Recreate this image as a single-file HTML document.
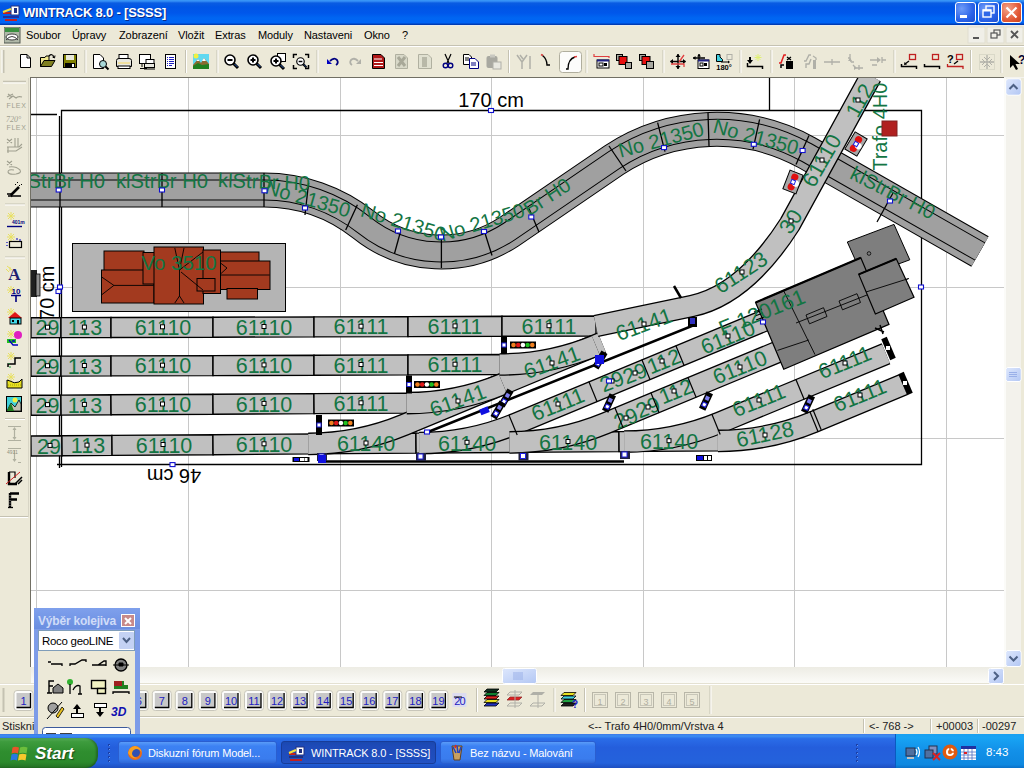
<!DOCTYPE html>
<html><head><meta charset="utf-8">
<style>
*{margin:0;padding:0;box-sizing:border-box}
html,body{width:1024px;height:768px;overflow:hidden;background:#ECE9D8;font-family:"Liberation Sans",sans-serif;font-size:11px;color:#000}
.a{position:absolute}
#title{left:0;top:0;width:1024px;height:25px;background:linear-gradient(#3D9CF8 0px,#2C84F2 1.5px,#0A5CE2 3px,#0055E5 7px,#0057EB 13px,#0066F2 18px,#0064F6 22.5px,#0048C8 24px,#0030A0 25px)}
#title .t{left:23px;top:5px;color:#fff;font-weight:bold;font-size:13px;letter-spacing:-0.2px;text-shadow:1px 1px 0 #0A2A88}
.tb{top:2px;width:21px;height:21px;border:1px solid #fff;border-radius:3px;background:radial-gradient(circle at 30% 30%,#6E9CF8,#2A62E8 60%,#1C4FD0)}
#menu{left:0;top:25px;width:1024px;height:21px;background:linear-gradient(#E8ECF6 0px,#ECE9D8 1.5px);border-bottom:1px solid #C5C2B2}
#menu span{position:absolute;top:4px;font-size:11px;letter-spacing:-0.1px}
#tool{left:0;top:46px;width:1024px;height:31px;background:#ECE9D8;border-top:1px solid #fff}
#left{left:0;top:77px;width:30px;height:607px;background:#ECE9D8}
#canvas{left:30px;top:77px;width:974px;height:590px;background:#fff;border-left:1px solid #716F64;border-top:1px solid #716F64;overflow:hidden}
#vscroll{left:1004px;top:77px;width:20px;height:590px;background:#F4F3EE}
#hscroll{left:31px;top:667px;width:973px;height:17px;background:#F4F3EE}
#corner{left:1004px;top:667px;width:20px;height:17px;background:#ECE9D8}
#btool{left:0;top:684px;width:1024px;height:32px;background:#ECE9D8;border-top:1px solid #fff}
#status{left:0;top:716px;width:1024px;height:18px;background:#ECE9D8;border-top:1px solid #C5C2B2}
#status span{position:absolute;top:3px;font-size:11px;color:#222}
#task{left:0;top:734px;width:1024px;height:34px;background:linear-gradient(#3C78E8 0%,#3D8FF2 6%,#2A6CE8 14%,#245EDC 40%,#2462DC 85%,#1D4EC0 100%)}
.tbtn{top:7px;height:23px;border-radius:3px;color:#fff;font-size:11px;letter-spacing:-0.15px;padding:5px 0 0 29px;white-space:nowrap;overflow:hidden}
</style></head><body>
<div id="title" class="a">
  <div class="a t">WINTRACK 8.0 - [SSSS]</div>
  <div class="a tb" style="left:955px"><svg width="19" height="19" style="position:absolute;left:0;top:0"><rect x="4" y="12" width="7" height="3" fill="#fff"/></svg></div>
  <div class="a tb" style="left:978px"><svg width="19" height="19" style="position:absolute;left:0;top:0"><rect x="7" y="3" width="8" height="7" fill="none" stroke="#fff" stroke-width="1.4"/><rect x="4" y="7" width="8" height="7" fill="#3068E8" stroke="#fff" stroke-width="1.4"/><rect x="4" y="6.5" width="8" height="2" fill="#fff"/></svg></div>
  <div class="a tb" style="left:1001px;background:radial-gradient(circle at 30% 30%,#F4A48A,#E35A38 60%,#C8401C)"><svg width="19" height="19" style="position:absolute;left:0;top:0"><path d="M4.5 4.5 L14.5 14.5 M14.5 4.5 L4.5 14.5" stroke="#fff" stroke-width="2.2"/></svg></div>
  <svg class="a" style="left:2px;top:3px" width="20" height="20"><rect x="1" y="9" width="16" height="2" fill="#C02020"/><rect x="1" y="13" width="16" height="2" fill="#2030A0"/><rect x="3" y="16" width="12" height="2" fill="#C02020"/><rect x="9" y="3" width="8" height="9" fill="#fff" stroke="#203080"/><rect x="12" y="5" width="3" height="5" fill="#203080"/><path d="M1 9 L9 6" stroke="#F0E040" stroke-width="2"/></svg>
</div>
<div id="menu" class="a">
  <svg class="a" style="left:4px;top:2px" width="18" height="18"><rect x="0" y="0" width="16" height="16" fill="#B0B8A8" stroke="#505850"/><rect x="1" y="1" width="14" height="4" fill="#3A9040"/><ellipse cx="8" cy="10" rx="6" ry="3" fill="#fff" stroke="#404040"/><path d="M2 13 Q8 6 14 13" stroke="#404040" fill="none"/></svg>
  <span style="left:26px">Soubor</span>
  <span style="left:72px">Úpravy</span>
  <span style="left:119px">Zobrazení</span>
  <span style="left:178px">Vložit</span>
  <span style="left:215px">Extras</span>
  <span style="left:258px">Moduly</span>
  <span style="left:304px">Nastaveni</span>
  <span style="left:364px">Okno</span>
  <span style="left:402px">?</span>
  <svg class="a" style="left:966px;top:1px" width="58" height="19">
    <rect x="2" y="1" width="17" height="16" fill="#F0EFE8" stroke="#E0DED0"/><rect x="7" y="11" width="6" height="2" fill="#555"/>
    <rect x="21" y="1" width="17" height="16" fill="#F0EFE8" stroke="#E0DED0"/><rect x="28" y="4" width="6" height="5" fill="none" stroke="#555" stroke-width="1.2"/><rect x="25" y="7" width="6" height="5" fill="#F0EFE8" stroke="#555" stroke-width="1.2"/>
    <rect x="40" y="1" width="17" height="16" fill="#F0EFE8" stroke="#E0DED0"/><path d="M45 5 L52 12 M52 5 L45 12" stroke="#555" stroke-width="1.8"/>
  </svg>
</div>
<div id="tool" class="a"><svg class="a" style="left:0;top:-47px" width="1024" height="80"><line x1="3.5" y1="50" x2="3.5" y2="73" stroke="#C5C2B2" stroke-width="2"/><line x1="2" y1="50" x2="2" y2="73" stroke="#fff"/><rect x="559.5" y="51.5" width="22" height="21" rx="3" fill="#FCFCFB" stroke="#B0AE9E"/><g transform="translate(19,54)"><path d="M1.5 0.5 H8 L11.5 4 V13.5 H1.5Z" fill="#fff" stroke="#000"/><path d="M8 0.5 V4 H11.5" fill="none" stroke="#000"/></g><g transform="translate(40,54)"><path d="M0.5 3.5 H5 L6 2 H9 V12.5 H0.5Z" fill="#F0E890" stroke="#000"/><path d="M0.5 12.5 L4 6.5 H15 L11.5 12.5Z" fill="#808020" stroke="#000"/><path d="M9 2 Q12 -1 14 3" fill="none" stroke="#000" stroke-width="1.2"/><path d="M12.5 3 L14.5 4 L15 1.5" fill="none" stroke="#000"/></g><g transform="translate(63,54)"><rect x="0.5" y="0.5" width="13" height="13" fill="#808000" stroke="#000"/><rect x="3" y="1" width="8" height="5" fill="#E8E8D8"/><rect x="2" y="9" width="10" height="4.5" fill="#000"/><rect x="9" y="10" width="2" height="3" fill="#fff"/></g><g transform="translate(93,54)"><path d="M0.5 0.5 H7 L10.5 4 V14.5 H0.5Z" fill="#fff" stroke="#000"/><circle cx="10" cy="10" r="3.5" fill="#A8D8D8" stroke="#000"/><path d="M12.5 12.5 L15.5 15.5" stroke="#000" stroke-width="2"/></g><g transform="translate(116,54)"><rect x="3" y="0.5" width="9" height="5" fill="#fff" stroke="#000"/><path d="M0.5 6.5 Q0.5 4.5 3 4.5 H13 Q15.5 4.5 15.5 6.5 V12.5 H0.5Z" fill="#E8E8E0" stroke="#000"/><rect x="2" y="8" width="12" height="2" fill="#F0E0A0"/><rect x="2" y="12" width="12" height="2.5" fill="#fff" stroke="#000"/></g><g transform="translate(139,54)"><rect x="0.5" y="0.5" width="11" height="9" fill="#fff" stroke="#000"/><path d="M3 10 V13 M1 14.5 H8" stroke="#000"/><rect x="7" y="5.5" width="8" height="4" fill="#fff" stroke="#000"/><rect x="5.5" y="9.5" width="10" height="4" fill="#E8E8E0" stroke="#000"/><path d="M5 15 H16" stroke="#000"/></g><g transform="translate(165,54)"><rect x="0.5" y="0.5" width="10" height="14" fill="#fff" stroke="#000"/><path d="M2 3.5H3 M4 3.5H9 M2 5.5H3 M4 5.5H9 M2 7.5H3 M4 7.5H9 M2 9.5H3 M4 9.5H9 M2 11.5H3 M4 11.5H7" stroke="#2020C0"/></g><g transform="translate(193,54)"><rect x="0" y="0" width="16" height="15" fill="#60D8F0"/><circle cx="3" cy="2" r="2.5" fill="#F0F040"/><path d="M0 15 V11 L5 5 L8 9 L11 4 L16 10 V15Z" fill="#8A6A30"/><path d="M5 5 L6.5 7 H3.5Z M11 4 L13 7 H9Z" fill="#fff"/><path d="M0 15 V12 L5 9 L9 11 L16 10 V15Z" fill="#208020"/></g><g transform="translate(224,54)"><circle cx="6" cy="6" r="5" fill="#fff" stroke="#000" stroke-width="1.6"/><path d="M9.5 9.5 L14 14" stroke="#000" stroke-width="3"/><path d="M10.5 10 L13.5 13" stroke="#3060B0" stroke-width="1"/><path d="M3.5 6H8.5" stroke="#000" stroke-width="2"/></g><g transform="translate(247,54)"><circle cx="6" cy="6" r="5" fill="#fff" stroke="#000" stroke-width="1.6"/><path d="M9.5 9.5 L14 14" stroke="#000" stroke-width="3"/><path d="M10.5 10 L13.5 13" stroke="#3060B0" stroke-width="1"/><path d="M3.5 6H8.5" stroke="#000" stroke-width="2"/><path d="M6 3.5V8.5" stroke="#000" stroke-width="2"/></g><g transform="translate(270,53)"><rect x="7.5" y="0.5" width="8" height="8" fill="#fff" stroke="#000"/><g transform="translate(0,2)"><circle cx="6" cy="6" r="5" fill="#fff" stroke="#000" stroke-width="1.6"/><path d="M9.5 9.5 L14 14" stroke="#000" stroke-width="3"/><path d="M10.5 10 L13.5 13" stroke="#3060B0" stroke-width="1"/><path d="M3.5 6H8.5" stroke="#000" stroke-width="2"/><path d="M6 3.5V8.5" stroke="#000" stroke-width="2"/></g></g><g transform="translate(293,54)"><path d="M0.5 4V0.5H4 M12 0.5H15.5V4 M15.5 11V14.5H12 M4 14.5H0.5V11" fill="none" stroke="#000" stroke-width="1.5"/><g transform="translate(3,3) scale(0.75)"><circle cx="6" cy="6" r="5" fill="#fff" stroke="#000" stroke-width="1.6"/><path d="M9.5 9.5 L14 14" stroke="#000" stroke-width="3"/><path d="M10.5 10 L13.5 13" stroke="#3060B0" stroke-width="1"/><path d="M3.5 6H8.5" stroke="#000" stroke-width="2"/></g></g><g transform="translate(326,57)"><path d="M4 4 Q8 0 11 3 Q13 6 10 8" fill="none" stroke="#000080" stroke-width="1.8"/><path d="M1 2 V7 H6Z" fill="#0000C0"/></g><g transform="translate(349,57)"><path d="M9 4 Q5 0 2 3 Q0 6 3 8" fill="none" stroke="#B0B0A8" stroke-width="1.8"/><path d="M12 2 V7 H7Z" fill="#B0B0A8"/></g><g transform="translate(372,54)"><path d="M0.5 0.5 H9 L12.5 4 V14.5 H0.5Z" fill="#B01818" stroke="#000"/><path d="M2 5H10 M2 8.5H11 M2 11.5H11" stroke="#fff" stroke-width="1"/></g><g transform="translate(395,54)"><path d="M0.5 0.5 H9 L12.5 4 V14.5 H0.5Z" fill="#D8D8C8" stroke="#B0B0A0"/><path d="M3 3 L10 12 M10 3 L3 12" stroke="#A8A898" stroke-width="3"/></g><g transform="translate(418,54)"><path d="M0.5 0.5 H10 L13.5 4 V14.5 H0.5Z" fill="#E0E0D0" stroke="#B0B0A0"/><rect x="4" y="3" width="5" height="10" fill="#B8B8A8"/></g><g transform="translate(442,54)"><path d="M3 0 L7 9 M9 0 L5 9" stroke="#000" stroke-width="1.2"/><circle cx="3.5" cy="11.5" r="2.3" fill="none" stroke="#000080" stroke-width="1.4"/><circle cx="8.5" cy="11.5" r="2.3" fill="none" stroke="#000080" stroke-width="1.4"/></g><g transform="translate(463,54)"><path d="M0.5 0.5H6L8.5 3V10.5H0.5Z" fill="#fff" stroke="#000"/><path d="M2 4H6 M2 6H6" stroke="#000"/><path d="M6.5 4.5H12L15.5 8V14.5H6.5Z" fill="#fff" stroke="#000080"/><path d="M8 9H13 M8 11H13" stroke="#000080"/></g><g transform="translate(486,54)"><rect x="0.5" y="2" width="11" height="12" rx="2" fill="#A8A8A0"/><rect x="4" y="0.5" width="5" height="3" fill="#C8C8C0"/><rect x="7" y="8" width="8" height="7" fill="#E8E8E0" stroke="#B0B0A8"/></g><g transform="translate(516,54)"><path d="M1 1 L6 8 V15 M11 1 L6 8 M4 1 L7 5 M14 2 L14 15" fill="none" stroke="#B0B0A8" stroke-width="1.5"/></g><g transform="translate(541,54)"><path d="M1 1 Q6 5 6 11 H9" fill="none" stroke="#000" stroke-width="1.4"/><path d="M0 0.5 L2 1.5" stroke="#E04040" stroke-width="1.4"/></g><g transform="translate(563,54)"><path d="M3 15 H5 Q5 5 12 3" fill="none" stroke="#000" stroke-width="1.4"/><path d="M11 3 L14 2.5" stroke="#E04040" stroke-width="1.4"/></g><g transform="translate(593,54)"><path d="M1 0 V2.5 H16 V4" fill="none" stroke="#E04040" stroke-width="1.2"/><rect x="4" y="6" width="12" height="8" fill="#fff" stroke="#000"/><rect x="4" y="5.5" width="12" height="2" fill="#202080"/><rect x="6" y="9" width="4" height="3" fill="none" stroke="#000"/><rect x="11" y="9" width="3" height="3" fill="#000"/></g><g transform="translate(616,54)"><rect x="0.5" y="0.5" width="6" height="6" fill="#A8A8A0" stroke="#000"/><rect x="3" y="2.5" width="8" height="8" fill="#E81010" stroke="#000"/><rect x="9.5" y="8.5" width="6" height="6" fill="#A8A8A0" stroke="#000"/></g><g transform="translate(639,54)"><rect x="0.5" y="0.5" width="6" height="6" fill="#A8A8A0" stroke="#000"/><rect x="3" y="2.5" width="8" height="8" fill="#E81010" stroke="#000"/><rect x="7.5" y="7.5" width="7" height="7" fill="#A8A8A0" stroke="#000"/></g><g transform="translate(670,54)"><path d="M8 0 V15 M0.5 7.5 H15.5" stroke="#000" stroke-width="1.4"/><path d="M8 0 L5.5 3 H10.5Z M8 15 L5.5 12 H10.5Z M0 7.5 L3 5 V10Z M16 7.5 L13 5 V10Z" fill="#000"/><path d="M1 10 H14 V13 M9 8 L14 1" fill="none" stroke="#E04040" stroke-width="1.3"/></g><g transform="translate(693,54)"><path d="M6 0 V7 M0 4 H12" stroke="#000" stroke-width="1.3"/><path d="M6 0 L4 2.5 H8Z M0 4 L2.5 2 V6Z" fill="#000"/><rect x="5" y="6" width="11" height="8.5" fill="#fff" stroke="#000"/><rect x="5" y="5.5" width="11" height="2" fill="#202080"/><rect x="7" y="9" width="3" height="3" fill="none" stroke="#000"/><rect x="11" y="9" width="3" height="3" fill="#000"/></g><g transform="translate(716,54)"><path d="M0.5 0.5 H4 V3 L6.5 5.5 V7.5 H0.5Z" fill="#40D0E0" stroke="#000"/><rect x="11" y="0.5" width="5" height="5" fill="none" stroke="#B0B0A8"/><path d="M5 8 H12" stroke="#000"/><path d="M12 6.5 L14 8 L12 9.5Z" fill="#000"/><text x="8" y="16" font-size="7.5" font-weight="bold" text-anchor="middle" font-family="Liberation Sans">180°</text></g><g transform="translate(747,54)"><path d="M3 3 V8" stroke="#000" stroke-width="2"/><path d="M0 6 L3 10 L6 6Z" fill="#000"/><path d="M0.5 9 V12.5 H15.5 V15" fill="none" stroke="#000" stroke-width="1.5"/><path d="M11 0 V7 M7.5 3.5 H14.5 M8.5 1 L13.5 6 M13.5 1 L8.5 6" stroke="#E0F070" stroke-width="1"/></g><g transform="translate(778,54)"><path d="M1 9 H3 L6 1 H8" fill="none" stroke="#E02020" stroke-width="1.5"/><path d="M3 14 V11 H6" fill="none" stroke="#000" stroke-width="1.5"/><rect x="8" y="7" width="7" height="8" fill="#000"/><path d="M9 3 L13 6 M13 3 L9 6" stroke="#000" stroke-width="1.3"/></g><g transform="translate(803,54)"><path d="M1 7 H3 L6 1 H8 M3 14 V10 H6 L8 5" fill="none" stroke="#B0B0A8" stroke-width="1.4"/><rect x="10" y="6" width="3" height="9" fill="#B0B0A8"/><path d="M10 2 L13 4 V6" fill="none" stroke="#B0B0A8" stroke-width="1.3"/></g><g transform="translate(824,54)"><path d="M0 8 H16 M8 5 V11" stroke="#B0B0A8" stroke-width="1.3"/></g><g transform="translate(847,54)"><path d="M3 0 V4 H1 M3 4 L4 8 M4 8 H7 M6 11 L9 14 H16 M12 11 V16" fill="none" stroke="#B0B0A8" stroke-width="1.3"/><path d="M3 4 L1 7 H5Z M10 14 L7 12 V16Z" fill="#B0B0A8"/></g><g transform="translate(870,54)"><path d="M0 6 H9 M2 11 H7 M12 3 V9 M12 6 H16" fill="none" stroke="#B0B0A8" stroke-width="1.3"/><path d="M11 6 L7 3 V9Z" fill="#B0B0A8"/></g><g transform="translate(901,54)"><rect x="8.5" y="0.5" width="6" height="5" fill="none" stroke="#C02020" stroke-width="1.3"/><path d="M8 7 L4 10" stroke="#000" stroke-width="1.3"/><path d="M3 11 L3.5 8 L6 10.5Z" fill="#000"/><path d="M0.5 10 V12.5 H15.5 V15" fill="none" stroke="#000" stroke-width="1.5"/></g><g transform="translate(924,54)"><rect x="8.5" y="0.5" width="6" height="5" fill="none" stroke="#C02020" stroke-width="1.3"/><path d="M0.5 10 V12.5 H15.5 V15" fill="none" stroke="#000" stroke-width="1.5"/></g><g transform="translate(947,54)"><text x="0" y="9" font-size="11" font-weight="bold" font-family="Liberation Sans">?</text><rect x="9.5" y="0.5" width="6" height="5" fill="none" stroke="#C02020" stroke-width="1.3"/><path d="M11 7 L7 10" stroke="#000" stroke-width="1.3"/><path d="M0.5 10 V12.5 H16 V15" fill="none" stroke="#C02020" stroke-width="1.3"/></g><g transform="translate(979,54)"><path d="M8 1 V15 M1 8 H15" stroke="#B0B0A8" stroke-width="1.3"/><path d="M5 3 L8 6 L11 3 M5 13 L8 10 L11 13 M3 5 L6 8 L3 11 M13 5 L10 8 L13 11" fill="none" stroke="#B0B0A8"/><path d="M0.5 0.5 H15.5 V15.5 H0.5Z" fill="none" stroke="#C8C8B8" stroke-dasharray="1 1"/></g><g transform="translate(1009,54)"><path d="M1 1 V14 L4 11 L7 16 L9 15 L6.5 10 H11Z" fill="#000"/><text x="9" y="10" font-size="12" font-weight="bold" fill="#000030" font-family="Liberation Sans">?</text></g><line x1="85.0" y1="50" x2="85.0" y2="73" stroke="#C5C2B2"/><line x1="86.0" y1="50" x2="86.0" y2="73" stroke="#fff"/><line x1="185.5" y1="50" x2="185.5" y2="73" stroke="#C5C2B2"/><line x1="186.5" y1="50" x2="186.5" y2="73" stroke="#fff"/><line x1="217.0" y1="50" x2="217.0" y2="73" stroke="#C5C2B2"/><line x1="218.0" y1="50" x2="218.0" y2="73" stroke="#fff"/><line x1="317.0" y1="50" x2="317.0" y2="73" stroke="#C5C2B2"/><line x1="318.0" y1="50" x2="318.0" y2="73" stroke="#fff"/><line x1="508.5" y1="50" x2="508.5" y2="73" stroke="#C5C2B2"/><line x1="509.5" y1="50" x2="509.5" y2="73" stroke="#fff"/><line x1="586.0" y1="50" x2="586.0" y2="73" stroke="#C5C2B2"/><line x1="587.0" y1="50" x2="587.0" y2="73" stroke="#fff"/><line x1="663.0" y1="50" x2="663.0" y2="73" stroke="#C5C2B2"/><line x1="664.0" y1="50" x2="664.0" y2="73" stroke="#fff"/><line x1="740.0" y1="50" x2="740.0" y2="73" stroke="#C5C2B2"/><line x1="741.0" y1="50" x2="741.0" y2="73" stroke="#fff"/><line x1="771.0" y1="50" x2="771.0" y2="73" stroke="#C5C2B2"/><line x1="772.0" y1="50" x2="772.0" y2="73" stroke="#fff"/><line x1="894.0" y1="50" x2="894.0" y2="73" stroke="#C5C2B2"/><line x1="895.0" y1="50" x2="895.0" y2="73" stroke="#fff"/><line x1="970.5" y1="50" x2="970.5" y2="73" stroke="#C5C2B2"/><line x1="971.5" y1="50" x2="971.5" y2="73" stroke="#fff"/><line x1="1001.0" y1="50" x2="1001.0" y2="73" stroke="#C5C2B2"/><line x1="1002.0" y1="50" x2="1002.0" y2="73" stroke="#fff"/></svg></div>
<div id="left" class="a"><svg class="a" style="left:0;top:-77px" width="32" height="700"><line x1="3" y1="81.5" x2="26" y2="81.5" stroke="#C5C2B2" stroke-width="1.5"/><line x1="3" y1="83" x2="26" y2="83" stroke="#fff"/><g transform="translate(6,93)"><path d="M2 1 L6 4 M1 4 L7 1 M3 6 L7 3 L10 5 Q12 3 16 4" fill="none" stroke="#A0A090" stroke-width="1.2"/><text x="0.5" y="15" font-size="7" fill="#A0A090" font-family="Liberation Sans" letter-spacing="0.6">FLEX</text></g><g transform="translate(6,115)"><text x="0" y="7" font-size="8" font-style="italic" fill="#A0A090" font-family="Liberation Serif">720°</text><text x="0.5" y="15" font-size="7" fill="#A0A090" font-family="Liberation Sans" letter-spacing="0.6">FLEX</text></g><g transform="translate(6,138)"><path d="M1 1 L6 5 M1 5 L6 1 M9 0 V9 M12 0 V9 M1 9 H13 L16 6 M1 13 H10 L16 9 M2 9 V15" fill="none" stroke="#A0A090" stroke-width="1.1"/></g><g transform="translate(6,160)"><path d="M1 1 L6 5 M1 5 L6 1 M3 7 Q10 6 14 10 Q16 13 10 14 Q3 15 2 12 Q2 9 8 10" fill="none" stroke="#A0A090" stroke-width="1.1"/></g><g transform="translate(6,182)"><path d="M1 12 H5 L6 15 M2 14 H15" fill="none" stroke="#000" stroke-width="1.4"/><path d="M5 13 L13 5" stroke="#000" stroke-width="2.5"/><path d="M11 1 L12 0 M15 3 L16 2 M13 3 L14 4 M9 3 L10 2" stroke="#000" stroke-width="1"/></g><g transform="translate(6,212)"><path d="M5 0 V8 M1 4 H9 M2 1 L8 7 M8 1 L2 7" stroke="#E8E060" stroke-width="1"/><text x="6" y="12" font-size="5" fill="#000080" font-family="Liberation Sans" font-weight="bold">401m</text><path d="M1 14.5 H16" stroke="#000080" stroke-width="1.4"/></g><g transform="translate(6,233)"><path d="M5 0 V8 M1 4 H9 M2 1 L8 7 M8 1 L2 7" stroke="#E8E060" stroke-width="1"/><rect x="3.5" y="8.5" width="12" height="6" fill="none" stroke="#000" stroke-width="1.2"/><path d="M1 9 V10 M1 12 V13 M10 6 H12 M13 7 H15" stroke="#0000C0" stroke-width="1.2"/></g><g transform="translate(6,264)"><path d="M0 5 L3 8 M4 3 L4 7 M1 2 L6 6" stroke="#E8E060"/><text x="8.5" y="15.5" font-size="17" font-weight="bold" fill="#202070" text-anchor="middle" font-family="Liberation Serif">A</text></g><g transform="translate(6,286)"><path d="M5 0 V8 M1 4 H9 M2 1 L8 7 M8 1 L2 7" stroke="#E8E060" stroke-width="1"/><text x="10" y="8" font-size="8" font-weight="bold" fill="#000080" text-anchor="middle" font-family="Liberation Sans">10</text><path d="M5 9.5 H15 M10 9.5 V16" stroke="#000080" stroke-width="1.6"/></g><g transform="translate(6,308)"><path d="M5 0 V8 M1 4 H9 M2 1 L8 7 M8 1 L2 7" stroke="#E8E060" stroke-width="1"/><path d="M2 10 L9 4 L16 10Z" fill="#E01818"/><rect x="4" y="10" width="11" height="6" fill="#40D8E8" stroke="#000"/><rect x="6" y="12" width="2" height="2" fill="#000"/><rect x="11" y="12" width="2" height="4" fill="#000"/></g><g transform="translate(6,330)"><path d="M5 0 V8 M1 4 H9 M2 1 L8 7 M8 1 L2 7" stroke="#E8E060" stroke-width="1"/><circle cx="12" cy="5" r="4" fill="#E020C0"/><path d="M1 9 H10 V13 H1Z" fill="#20C020"/><path d="M3 10 L7 15 H12 M6 11 H9" stroke="#0000C0" stroke-width="1.3" fill="none"/></g><g transform="translate(6,352)"><path d="M5 0 V8 M1 4 H9 M2 1 L8 7 M8 1 L2 7" stroke="#E8E060" stroke-width="1"/><path d="M2 15 V12 H9 V6 H15" fill="none" stroke="#000" stroke-width="1.5"/><path d="M3 15 H5 M3 12 V11" stroke="#20A040"/></g><g transform="translate(6,373)"><path d="M5 0 V8 M1 4 H9 M2 1 L8 7 M8 1 L2 7" stroke="#E8E060" stroke-width="1"/><path d="M1 7 V15 H16 V6 L13 9 Q8 11 4 8Z" fill="#E8E020" stroke="#000"/><path d="M2 12 H15" stroke="#A0A010" stroke-dasharray="1 1"/></g><g transform="translate(6,396)"><rect x="0.5" y="0.5" width="15" height="15" fill="#40D0D8" stroke="#000"/><circle cx="9" cy="4" r="2.5" fill="#F0F040"/><path d="M1 15 L5 7 L9 11 L13 4 L15 8 V15Z" fill="#C0C0B0" stroke="#000" stroke-width="0.8"/><path d="M1 15 L5 7 L8 15Z" fill="#208020"/></g><g transform="translate(6,426)"><path d="M2 0.5 H15 M2 14.5 H15 M8.5 2 V13" stroke="#B0B0A0" stroke-width="1.2"/><path d="M8.5 1 L6.5 4 H10.5Z M8.5 14 L6.5 11 H10.5Z" fill="#B0B0A0"/></g><g transform="translate(6,448)"><path d="M2 0.5 H15 M8.5 2 V13 M12 14.5 H15" stroke="#B0B0A0" stroke-width="1.2"/><path d="M8.5 14 L6.5 11 H10.5Z" fill="#B0B0A0"/><text x="1" y="6" font-size="5" fill="#909080" font-family="Liberation Sans">4911</text></g><g transform="translate(6,471)"><path d="M3 1 V13 H11" fill="none" stroke="#000" stroke-width="2.4"/><path d="M3 1 H9 L9 7" fill="none" stroke="#000" stroke-width="1.2"/><path d="M9 13 L16 6 M12 13 L16 9" stroke="#000" stroke-width="1.5"/><path d="M0 13 L14 1" stroke="#D02020" stroke-width="1"/></g><g transform="translate(6,492)"><path d="M4 1 V15 M4 1.5 H13 M4 7.5 H11" stroke="#000" stroke-width="2.4"/><path d="M2 15.5 H7" stroke="#000" stroke-width="1.3"/><path d="M4 3 V14" stroke="#fff" stroke-width="0.6" stroke-dasharray="1 1.5"/></g><line x1="5" y1="204.0" x2="25" y2="204.0" stroke="#C5C2B2"/><line x1="5" y1="205.0" x2="25" y2="205.0" stroke="#fff"/><line x1="5" y1="257.0" x2="25" y2="257.0" stroke="#C5C2B2"/><line x1="5" y1="258.0" x2="25" y2="258.0" stroke="#fff"/><line x1="5" y1="418.5" x2="25" y2="418.5" stroke="#C5C2B2"/><line x1="5" y1="419.5" x2="25" y2="419.5" stroke="#fff"/><line x1="0" y1="516.5" x2="28" y2="516.5" stroke="#C5C2B2"/><line x1="0" y1="517.5" x2="28" y2="517.5" stroke="#fff"/><line x1="28.5" y1="78" x2="28.5" y2="517" stroke="#D8D5C5"/></svg></div>
<div id="canvas" class="a"><svg class="a" style="left:-31px;top:-78px" width="1024" height="768" font-family="Liberation Sans, sans-serif"><line x1="36.5" y1="78" x2="36.5" y2="667" stroke="#C8C8C8"/>
<line x1="188.5" y1="78" x2="188.5" y2="667" stroke="#C8C8C8"/>
<line x1="340.5" y1="78" x2="340.5" y2="667" stroke="#C8C8C8"/>
<line x1="491.5" y1="78" x2="491.5" y2="667" stroke="#C8C8C8"/>
<line x1="643.5" y1="78" x2="643.5" y2="667" stroke="#C8C8C8"/>
<line x1="794.5" y1="78" x2="794.5" y2="667" stroke="#C8C8C8"/>
<line x1="946.5" y1="78" x2="946.5" y2="667" stroke="#C8C8C8"/>
<line x1="31" y1="135.5" x2="1004" y2="135.5" stroke="#C8C8C8"/>
<line x1="31" y1="287.5" x2="1004" y2="287.5" stroke="#C8C8C8"/>
<line x1="31" y1="438.5" x2="1004" y2="438.5" stroke="#C8C8C8"/>
<line x1="31" y1="590.5" x2="1004" y2="590.5" stroke="#C8C8C8"/>
<path d="M31 114.5 H57 M59.5 116 V468 M61.5 467 V110.5 H921.5 V464.5 H57" fill="none" stroke="#000" stroke-width="1.3"/>
<path d="M769.5 78 V110" stroke="#000" stroke-width="1.3"/>
<path d="M20 190 L264 190 A160 160 0 0 1 363.9 224.9 A123.7 123.7 0 0 0 509.2 231.6 L614 160.1 A186.2 186.2 0 0 1 807 152.8 L980 251.5" fill="none" stroke="#000" stroke-width="35"/>
<path d="M20 190 L264 190 A160 160 0 0 1 363.9 224.9 A123.7 123.7 0 0 0 509.2 231.6 L614 160.1 A186.2 186.2 0 0 1 807 152.8 L980 251.5" fill="none" stroke="#A0A0A0" stroke-width="33"/>
<path d="M20 190 L264 190 A160 160 0 0 1 363.9 224.9 A123.7 123.7 0 0 0 509.2 231.6 L614 160.1 A186.2 186.2 0 0 1 807 152.8 L980 251.5" fill="none" stroke="#000" stroke-width="21"/>
<path d="M20 190 L264 190 A160 160 0 0 1 363.9 224.9 A123.7 123.7 0 0 0 509.2 231.6 L614 160.1 A186.2 186.2 0 0 1 807 152.8 L980 251.5" fill="none" stroke="#A0A0A0" stroke-width="19"/>
<rect x="72.5" y="243.5" width="213" height="68" fill="#B4B4B4" stroke="#000"/>
<rect x="104.0" y="251.0" width="40.0" height="26.0" fill="#A33A1F" stroke="#000" stroke-width="1"/>
<rect x="101.5" y="270.0" width="52.5" height="33.0" fill="#A33A1F" stroke="#000" stroke-width="1"/>
<rect x="143.0" y="252.5" width="12.0" height="31.5" fill="#A33A1F" stroke="#000" stroke-width="1"/>
<rect x="154.0" y="247.0" width="49.5" height="57.0" fill="#A33A1F" stroke="#000" stroke-width="1"/>
<rect x="203.0" y="250.0" width="17.5" height="43.5" fill="#A33A1F" stroke="#000" stroke-width="1"/>
<rect x="220.5" y="252.0" width="38.5" height="11.0" fill="#A33A1F" stroke="#000" stroke-width="1"/>
<rect x="220.5" y="261.0" width="49.5" height="28.5" fill="#A33A1F" stroke="#000" stroke-width="1"/>
<rect x="227.0" y="288.5" width="30.5" height="10.5" fill="#A33A1F" stroke="#000" stroke-width="1"/>
<rect x="197.0" y="278.5" width="18.0" height="12.5" fill="#A33A1F" stroke="#000" stroke-width="1"/>
<path d="M101.7 277 L113.9 285.4 L101.7 294.8 M113.9 285.4 H153.7 M174.8 248 L179.5 270 L184 248 M179.5 270 V296 L174.8 303 M179.5 296 L184 303 M179.5 270 L203 252 M181 272 L203 290 M220.5 275 H269.7 M220.5 263 L227 268 L220.5 274" fill="none" stroke="#000" stroke-width="0.9"/>
<polygon points="31.0,337.7 61.0,337.6 61.0,317.6 31.0,317.7" fill="#C0C0C0" stroke="#000" stroke-width="1.4"/>
<polygon points="61.0,337.6 111.0,337.5 111.0,317.5 61.0,317.6" fill="#C0C0C0" stroke="#000" stroke-width="1.4"/>
<polygon points="111.0,337.5 213.0,337.2 213.0,317.2 111.0,317.5" fill="#C0C0C0" stroke="#000" stroke-width="1.4"/>
<polygon points="213.0,337.2 314.0,336.9 314.0,316.9 213.0,317.2" fill="#C0C0C0" stroke="#000" stroke-width="1.4"/>
<polygon points="314.0,336.9 408.0,336.6 408.0,316.6 314.0,316.9" fill="#C0C0C0" stroke="#000" stroke-width="1.4"/>
<polygon points="408.0,336.6 502.0,336.3 502.0,316.3 408.0,316.6" fill="#C0C0C0" stroke="#000" stroke-width="1.4"/>
<polygon points="502.0,336.3 596.0,336.0 596.0,316.0 502.0,316.3" fill="#C0C0C0" stroke="#000" stroke-width="1.4"/>
<polygon points="31.0,376.2 61.0,376.1 61.0,356.1 31.0,356.2" fill="#C0C0C0" stroke="#000" stroke-width="1.4"/>
<polygon points="61.0,376.1 111.0,375.9 111.0,355.9 61.0,356.1" fill="#C0C0C0" stroke="#000" stroke-width="1.4"/>
<polygon points="111.0,375.9 213.0,375.6 213.0,355.6 111.0,355.9" fill="#C0C0C0" stroke="#000" stroke-width="1.4"/>
<polygon points="213.0,375.6 314.0,375.2 314.0,355.2 213.0,355.6" fill="#C0C0C0" stroke="#000" stroke-width="1.4"/>
<polygon points="314.0,375.2 408.0,374.9 408.0,354.9 314.0,355.2" fill="#C0C0C0" stroke="#000" stroke-width="1.4"/>
<polygon points="408.0,374.9 502.0,374.5 502.0,354.5 408.0,354.9" fill="#C0C0C0" stroke="#000" stroke-width="1.4"/>
<polygon points="31.1,415.2 61.1,415.1 60.9,395.1 30.9,395.2" fill="#C0C0C0" stroke="#000" stroke-width="1.4"/>
<polygon points="61.1,415.1 111.1,414.8 110.9,394.8 60.9,395.1" fill="#C0C0C0" stroke="#000" stroke-width="1.4"/>
<polygon points="111.1,414.8 213.1,414.2 212.9,394.2 110.9,394.8" fill="#C0C0C0" stroke="#000" stroke-width="1.4"/>
<polygon points="213.1,414.2 314.1,413.6 313.9,393.6 212.9,394.2" fill="#C0C0C0" stroke="#000" stroke-width="1.4"/>
<polygon points="314.1,413.6 408.1,413.1 407.9,393.1 313.9,393.6" fill="#C0C0C0" stroke="#000" stroke-width="1.4"/>
<polygon points="31.1,456.0 62.1,455.8 61.9,435.8 30.9,436.0" fill="#C0C0C0" stroke="#000" stroke-width="1.4"/>
<polygon points="62.1,455.8 112.1,455.4 111.9,435.4 61.9,435.8" fill="#C0C0C0" stroke="#000" stroke-width="1.4"/>
<polygon points="112.1,455.4 213.1,454.7 212.9,434.7 111.9,435.4" fill="#C0C0C0" stroke="#000" stroke-width="1.4"/>
<polygon points="213.1,454.7 314.1,453.9 313.9,433.9 212.9,434.7" fill="#C0C0C0" stroke="#000" stroke-width="1.4"/>
<polygon points="314.1,453.9 416.1,453.1 415.9,433.1 313.9,433.9" fill="#C0C0C0" stroke="#000" stroke-width="1.4"/>
<polygon points="416.1,453.1 517.1,452.4 516.9,432.4 415.9,433.1" fill="#C0C0C0" stroke="#000" stroke-width="1.4"/>
<polygon points="517.1,452.4 619.1,451.6 618.9,431.6 516.9,432.4" fill="#C0C0C0" stroke="#000" stroke-width="1.4"/>
<polygon points="619.1,451.6 720.1,450.9 719.9,430.9 618.9,431.6" fill="#C0C0C0" stroke="#000" stroke-width="1.4"/>
<path d="M308.2 443.9 Q358.2 443.9 404.4 424.8 L602.0 342.8" fill="none" stroke="#000" stroke-width="22.6"/>
<path d="M308.2 443.9 Q358.2 443.9 404.4 424.8 L602.0 342.8" fill="none" stroke="#C0C0C0" stroke-width="20"/>
<path d="M419.1 443.1 Q469.1 443.1 515.3 424.0 L792.0 309.1" fill="none" stroke="#000" stroke-width="22.6"/>
<path d="M419.1 443.1 Q469.1 443.1 515.3 424.0 L792.0 309.1" fill="none" stroke="#C0C0C0" stroke-width="20"/>
<path d="M509.4 442.4 Q559.4 442.4 605.6 423.3 L802.0 341.8" fill="none" stroke="#000" stroke-width="22.6"/>
<path d="M509.4 442.4 Q559.4 442.4 605.6 423.3 L802.0 341.8" fill="none" stroke="#C0C0C0" stroke-width="20"/>
<path d="M624.1 441.6 Q674.1 441.6 720.3 422.4 L886.0 353.7" fill="none" stroke="#000" stroke-width="22.6"/>
<path d="M624.1 441.6 Q674.1 441.6 720.3 422.4 L886.0 353.7" fill="none" stroke="#C0C0C0" stroke-width="20"/>
<path d="M717.9 440.9 Q767.9 440.9 814.1 421.7 L903.0 384.8" fill="none" stroke="#000" stroke-width="22.6"/>
<path d="M717.9 440.9 Q767.9 440.9 814.1 421.7 L903.0 384.8" fill="none" stroke="#C0C0C0" stroke-width="20"/>
<path d="M406.7 403.1 Q456.7 403.1 502.9 383.9" fill="none" stroke="#000" stroke-width="22.6"/>
<path d="M406.7 403.1 Q456.7 403.1 502.9 383.9" fill="none" stroke="#C0C0C0" stroke-width="20"/>
<path d="M499.6 364.5 Q549.6 364.5 595.8 345.4" fill="none" stroke="#000" stroke-width="22.6"/>
<path d="M499.6 364.5 Q549.6 364.5 595.8 345.4" fill="none" stroke="#C0C0C0" stroke-width="20"/>
<path d="M596 326.0 L692 306.0 Q745 294.5 790 224 L871 76" fill="none" stroke="#000" stroke-width="22.6"/>
<path d="M596 326.0 L692 306.0 Q745 294.5 790 224 L871 76" fill="none" stroke="#C0C0C0" stroke-width="20"/>
<path d="M428 432 L692 326 L690 318" fill="none" stroke="#000" stroke-width="2.5"/>
<text x="0" y="0" transform="translate(47.5 328.4) rotate(0.0)" font-size="21.5" fill="#137543" text-anchor="middle" dominant-baseline="central">29</text>
<text x="0" y="0" transform="translate(85.0 328.2) rotate(0.0)" font-size="21.5" fill="#137543" text-anchor="middle" dominant-baseline="central">113</text>
<text x="0" y="0" transform="translate(163.0 328.0) rotate(0.0)" font-size="21.5" fill="#137543" text-anchor="middle" dominant-baseline="central">61110</text>
<text x="0" y="0" transform="translate(264.0 327.7) rotate(0.0)" font-size="21.5" fill="#137543" text-anchor="middle" dominant-baseline="central">61110</text>
<text x="0" y="0" transform="translate(47.5 366.9) rotate(0.0)" font-size="21.5" fill="#137543" text-anchor="middle" dominant-baseline="central">29</text>
<text x="0" y="0" transform="translate(85.0 366.7) rotate(0.0)" font-size="21.5" fill="#137543" text-anchor="middle" dominant-baseline="central">113</text>
<text x="0" y="0" transform="translate(163.0 366.4) rotate(0.0)" font-size="21.5" fill="#137543" text-anchor="middle" dominant-baseline="central">61110</text>
<text x="0" y="0" transform="translate(264.0 366.1) rotate(0.0)" font-size="21.5" fill="#137543" text-anchor="middle" dominant-baseline="central">61110</text>
<text x="0" y="0" transform="translate(47.5 405.8) rotate(0.0)" font-size="21.5" fill="#137543" text-anchor="middle" dominant-baseline="central">29</text>
<text x="0" y="0" transform="translate(85.0 405.6) rotate(0.0)" font-size="21.5" fill="#137543" text-anchor="middle" dominant-baseline="central">113</text>
<text x="0" y="0" transform="translate(163.0 405.2) rotate(0.0)" font-size="21.5" fill="#137543" text-anchor="middle" dominant-baseline="central">61110</text>
<text x="0" y="0" transform="translate(264.0 404.6) rotate(0.0)" font-size="21.5" fill="#137543" text-anchor="middle" dominant-baseline="central">61110</text>
<text x="0" y="0" transform="translate(49.0 446.6) rotate(0.0)" font-size="21.5" fill="#137543" text-anchor="middle" dominant-baseline="central">29</text>
<text x="0" y="0" transform="translate(88.0 446.3) rotate(0.0)" font-size="21.5" fill="#137543" text-anchor="middle" dominant-baseline="central">113</text>
<text x="0" y="0" transform="translate(164.0 445.7) rotate(0.0)" font-size="21.5" fill="#137543" text-anchor="middle" dominant-baseline="central">61110</text>
<text x="0" y="0" transform="translate(264.0 445.0) rotate(0.0)" font-size="21.5" fill="#137543" text-anchor="middle" dominant-baseline="central">61110</text>
<text x="0" y="0" transform="translate(361.0 327.4) rotate(0.0)" font-size="21.5" fill="#137543" text-anchor="middle" dominant-baseline="central">61111</text>
<text x="0" y="0" transform="translate(455.0 327.1) rotate(0.0)" font-size="21.5" fill="#137543" text-anchor="middle" dominant-baseline="central">61111</text>
<text x="0" y="0" transform="translate(549.0 326.9) rotate(0.0)" font-size="21.5" fill="#137543" text-anchor="middle" dominant-baseline="central">61111</text>
<text x="0" y="0" transform="translate(361.0 365.7) rotate(0.0)" font-size="21.5" fill="#137543" text-anchor="middle" dominant-baseline="central">61111</text>
<text x="0" y="0" transform="translate(455.0 365.4) rotate(0.0)" font-size="21.5" fill="#137543" text-anchor="middle" dominant-baseline="central">61111</text>
<text x="0" y="0" transform="translate(361.0 404.0) rotate(0.0)" font-size="21.5" fill="#137543" text-anchor="middle" dominant-baseline="central">61111</text>
<text x="0" y="0" transform="translate(366.0 444.2) rotate(0.0)" font-size="21.5" fill="#137543" text-anchor="middle" dominant-baseline="central">61140</text>
<text x="0" y="0" transform="translate(467.0 443.5) rotate(0.0)" font-size="21.5" fill="#137543" text-anchor="middle" dominant-baseline="central">61140</text>
<text x="0" y="0" transform="translate(568.0 442.7) rotate(0.0)" font-size="21.5" fill="#137543" text-anchor="middle" dominant-baseline="central">61140</text>
<text x="0" y="0" transform="translate(669.0 441.9) rotate(0.0)" font-size="21.5" fill="#137543" text-anchor="middle" dominant-baseline="central">61140</text>
<rect x="45.5" y="325.2" width="4" height="4" fill="#fff" stroke="#000" stroke-width="1" transform="rotate(0.0 47.5 327.2)"/>
<rect x="45.5" y="363.7" width="4" height="4" fill="#fff" stroke="#000" stroke-width="1" transform="rotate(0.0 47.5 365.7)"/>
<rect x="45.5" y="402.6" width="4" height="4" fill="#fff" stroke="#000" stroke-width="1" transform="rotate(0.0 47.5 404.6)"/>
<rect x="48.0" y="443.4" width="4" height="4" fill="#fff" stroke="#000" stroke-width="1" transform="rotate(0.0 50.0 445.4)"/>
<rect x="82.4" y="325.1" width="4" height="4" fill="#fff" stroke="#000" stroke-width="1" transform="rotate(0.0 84.4 327.1)"/>
<rect x="82.4" y="363.5" width="4" height="4" fill="#fff" stroke="#000" stroke-width="1" transform="rotate(0.0 84.4 365.5)"/>
<rect x="82.4" y="402.4" width="4" height="4" fill="#fff" stroke="#000" stroke-width="1" transform="rotate(0.0 84.4 404.4)"/>
<rect x="85.0" y="443.1" width="4" height="4" fill="#fff" stroke="#000" stroke-width="1" transform="rotate(0.0 87.0 445.1)"/>
<rect x="160.5" y="324.8" width="4" height="4" fill="#fff" stroke="#000" stroke-width="1" transform="rotate(0.0 162.5 326.8)"/>
<rect x="160.5" y="363.2" width="4" height="4" fill="#fff" stroke="#000" stroke-width="1" transform="rotate(0.0 162.5 365.2)"/>
<rect x="160.5" y="402.0" width="4" height="4" fill="#fff" stroke="#000" stroke-width="1" transform="rotate(0.0 162.5 404.0)"/>
<rect x="161.0" y="442.5" width="4" height="4" fill="#fff" stroke="#000" stroke-width="1" transform="rotate(0.0 163.0 444.5)"/>
<rect x="262.0" y="324.5" width="4" height="4" fill="#fff" stroke="#000" stroke-width="1" transform="rotate(0.0 264.0 326.5)"/>
<rect x="262.0" y="362.9" width="4" height="4" fill="#fff" stroke="#000" stroke-width="1" transform="rotate(0.0 264.0 364.9)"/>
<rect x="262.0" y="401.4" width="4" height="4" fill="#fff" stroke="#000" stroke-width="1" transform="rotate(0.0 264.0 403.4)"/>
<rect x="262.0" y="441.8" width="4" height="4" fill="#fff" stroke="#000" stroke-width="1" transform="rotate(0.0 264.0 443.8)"/>
<rect x="359.0" y="324.2" width="4" height="4" fill="#fff" stroke="#000" stroke-width="1" transform="rotate(0.0 361.0 326.2)"/>
<rect x="359.0" y="362.5" width="4" height="4" fill="#fff" stroke="#000" stroke-width="1" transform="rotate(0.0 361.0 364.5)"/>
<rect x="359.0" y="400.8" width="4" height="4" fill="#fff" stroke="#000" stroke-width="1" transform="rotate(0.0 361.0 402.8)"/>
<rect x="453.0" y="323.9" width="4" height="4" fill="#fff" stroke="#000" stroke-width="1" transform="rotate(0.0 455.0 325.9)"/>
<rect x="453.0" y="362.2" width="4" height="4" fill="#fff" stroke="#000" stroke-width="1" transform="rotate(0.0 455.0 364.2)"/>
<rect x="547.0" y="323.7" width="4" height="4" fill="#fff" stroke="#000" stroke-width="1" transform="rotate(0.0 549.0 325.7)"/>
<rect x="364.0" y="441.0" width="4" height="4" fill="#fff" stroke="#000" stroke-width="1" transform="rotate(0.0 366.0 443.0)"/>
<rect x="465.0" y="440.3" width="4" height="4" fill="#fff" stroke="#000" stroke-width="1" transform="rotate(0.0 467.0 442.3)"/>
<rect x="566.0" y="439.5" width="4" height="4" fill="#fff" stroke="#000" stroke-width="1" transform="rotate(0.0 568.0 441.5)"/>
<rect x="667.0" y="438.7" width="4" height="4" fill="#fff" stroke="#000" stroke-width="1" transform="rotate(0.0 669.0 440.7)"/>
<text x="0" y="0" transform="translate(458.0 400.7) rotate(-20.0)" font-size="21.5" fill="#137543" text-anchor="middle" dominant-baseline="central">61141</text>
<text x="0" y="0" transform="translate(552.0 362.7) rotate(-20.0)" font-size="21.5" fill="#137543" text-anchor="middle" dominant-baseline="central">61141</text>
<text x="0" y="0" transform="translate(644.0 324.7) rotate(-20.0)" font-size="21.5" fill="#137543" text-anchor="middle" dominant-baseline="central">61141</text>
<text x="0" y="0" transform="translate(558.0 404.7) rotate(-22.0)" font-size="21.5" fill="#137543" text-anchor="middle" dominant-baseline="central">61111</text>
<text x="0" y="0" transform="translate(612.0 381.7) rotate(-22.0)" font-size="21.5" fill="#137543" text-anchor="middle" dominant-baseline="central">29</text>
<text x="0" y="0" transform="translate(635.0 373.7) rotate(-22.0)" font-size="21.5" fill="#137543" text-anchor="middle" dominant-baseline="central">29</text>
<text x="0" y="0" transform="translate(664.0 361.7) rotate(-22.0)" font-size="21.5" fill="#137543" text-anchor="middle" dominant-baseline="central">112</text>
<text x="0" y="0" transform="translate(728.0 337.7) rotate(-22.0)" font-size="21.5" fill="#137543" text-anchor="middle" dominant-baseline="central">61110</text>
<text x="0" y="0" transform="translate(626.0 418.7) rotate(-22.0)" font-size="21.5" fill="#137543" text-anchor="middle" dominant-baseline="central">29</text>
<text x="0" y="0" transform="translate(648.0 407.7) rotate(-22.0)" font-size="21.5" fill="#137543" text-anchor="middle" dominant-baseline="central">29</text>
<text x="0" y="0" transform="translate(676.0 391.7) rotate(-22.0)" font-size="21.5" fill="#137543" text-anchor="middle" dominant-baseline="central">112</text>
<text x="0" y="0" transform="translate(740.0 367.7) rotate(-22.0)" font-size="21.5" fill="#137543" text-anchor="middle" dominant-baseline="central">61110</text>
<text x="0" y="0" transform="translate(759.0 400.7) rotate(-22.0)" font-size="21.5" fill="#137543" text-anchor="middle" dominant-baseline="central">61111</text>
<text x="0" y="0" transform="translate(845.0 362.7) rotate(-22.0)" font-size="21.5" fill="#137543" text-anchor="middle" dominant-baseline="central">61111</text>
<text x="0" y="0" transform="translate(765.0 434.7) rotate(-12.0)" font-size="21.5" fill="#137543" text-anchor="middle" dominant-baseline="central">61128</text>
<text x="0" y="0" transform="translate(860.0 395.7) rotate(-22.0)" font-size="21.5" fill="#137543" text-anchor="middle" dominant-baseline="central">61111</text>
<text x="0" y="0" transform="translate(741.0 272.7) rotate(-33.0)" font-size="21.5" fill="#137543" text-anchor="middle" dominant-baseline="central">61123</text>
<text x="0" y="0" transform="translate(791.0 221.7) rotate(-58.0)" font-size="21.5" fill="#137543" text-anchor="middle" dominant-baseline="central">30</text>
<text x="0" y="0" transform="translate(822.0 160.7) rotate(-60.0)" font-size="21.5" fill="#137543" text-anchor="middle" dominant-baseline="central">61110</text>
<text x="0" y="0" transform="translate(860.0 100.7) rotate(-61.0)" font-size="21.5" fill="#137543" text-anchor="middle" dominant-baseline="central">112</text>
<rect x="456.0" y="399.0" width="4" height="4" fill="#fff" stroke="#000" stroke-width="1" transform="rotate(0.0 458.0 401.0)"/>
<rect x="550.0" y="361.0" width="4" height="4" fill="#fff" stroke="#000" stroke-width="1" transform="rotate(0.0 552.0 363.0)"/>
<rect x="642.0" y="322.0" width="4" height="4" fill="#fff" stroke="#000" stroke-width="1" transform="rotate(0.0 644.0 324.0)"/>
<rect x="556.0" y="402.0" width="4" height="4" fill="#fff" stroke="#000" stroke-width="1" transform="rotate(0.0 558.0 404.0)"/>
<rect x="610.0" y="379.0" width="4" height="4" fill="#fff" stroke="#000" stroke-width="1" transform="rotate(0.0 612.0 381.0)"/>
<rect x="633.0" y="371.0" width="4" height="4" fill="#fff" stroke="#000" stroke-width="1" transform="rotate(0.0 635.0 373.0)"/>
<rect x="660.0" y="359.0" width="4" height="4" fill="#fff" stroke="#000" stroke-width="1" transform="rotate(0.0 662.0 361.0)"/>
<rect x="726.0" y="334.0" width="4" height="4" fill="#fff" stroke="#000" stroke-width="1" transform="rotate(0.0 728.0 336.0)"/>
<rect x="624.0" y="416.0" width="4" height="4" fill="#fff" stroke="#000" stroke-width="1" transform="rotate(0.0 626.0 418.0)"/>
<rect x="646.0" y="405.0" width="4" height="4" fill="#fff" stroke="#000" stroke-width="1" transform="rotate(0.0 648.0 407.0)"/>
<rect x="672.0" y="389.0" width="4" height="4" fill="#fff" stroke="#000" stroke-width="1" transform="rotate(0.0 674.0 391.0)"/>
<rect x="738.0" y="365.0" width="4" height="4" fill="#fff" stroke="#000" stroke-width="1" transform="rotate(0.0 740.0 367.0)"/>
<rect x="757.0" y="398.0" width="4" height="4" fill="#fff" stroke="#000" stroke-width="1" transform="rotate(0.0 759.0 400.0)"/>
<rect x="843.0" y="361.0" width="4" height="4" fill="#fff" stroke="#000" stroke-width="1" transform="rotate(0.0 845.0 363.0)"/>
<rect x="763.0" y="433.0" width="4" height="4" fill="#fff" stroke="#000" stroke-width="1" transform="rotate(0.0 765.0 435.0)"/>
<rect x="858.0" y="393.0" width="4" height="4" fill="#fff" stroke="#000" stroke-width="1" transform="rotate(0.0 860.0 395.0)"/>
<rect x="740.0" y="270.0" width="4" height="4" fill="#fff" stroke="#000" stroke-width="1" transform="rotate(0.0 742.0 272.0)"/>
<rect x="789.0" y="219.0" width="4" height="4" fill="#fff" stroke="#000" stroke-width="1" transform="rotate(0.0 791.0 221.0)"/>
<rect x="820.0" y="158.0" width="4" height="4" fill="#fff" stroke="#000" stroke-width="1" transform="rotate(0.0 822.0 160.0)"/>
<rect x="856.0" y="98.0" width="4" height="4" fill="#fff" stroke="#000" stroke-width="1" transform="rotate(0.0 858.0 100.0)"/>
<line x1="517.2" y1="435.1" x2="508.8" y2="414.7" stroke="#000" stroke-width="1.2"/>
<line x1="597.2" y1="401.9" x2="588.8" y2="381.5" stroke="#000" stroke-width="1.2"/>
<line x1="650.2" y1="379.9" x2="641.8" y2="359.5" stroke="#000" stroke-width="1.2"/>
<line x1="684.2" y1="365.8" x2="675.8" y2="345.4" stroke="#000" stroke-width="1.2"/>
<line x1="623.2" y1="427.9" x2="614.8" y2="407.6" stroke="#000" stroke-width="1.2"/>
<line x1="659.2" y1="412.9" x2="650.8" y2="392.6" stroke="#000" stroke-width="1.2"/>
<line x1="696.2" y1="397.6" x2="687.8" y2="377.3" stroke="#000" stroke-width="1.2"/>
<line x1="794.2" y1="356.9" x2="785.8" y2="336.6" stroke="#000" stroke-width="1.2"/>
<line x1="720.2" y1="434.4" x2="711.8" y2="414.0" stroke="#000" stroke-width="1.2"/>
<line x1="804.2" y1="399.5" x2="795.8" y2="379.2" stroke="#000" stroke-width="1.2"/>
<line x1="818.2" y1="431.9" x2="809.8" y2="411.6" stroke="#000" stroke-width="1.2"/>
<line x1="821.2" y1="429.7" x2="812.8" y2="409.3" stroke="#000" stroke-width="1.2"/>
<rect x="501.0" y="336.0" width="6" height="18" fill="#000"/><rect x="502.0" y="343.0" width="4" height="4" fill="#fff" stroke="#2020E0"/>
<rect x="510.0" y="341.5" width="26" height="7" fill="#000"/>
<circle cx="513.5" cy="345.0" r="2.3" fill="#F08020"/>
<circle cx="518.2" cy="345.0" r="2.3" fill="#E01818"/>
<circle cx="522.9" cy="345.0" r="2.3" fill="#fff"/>
<circle cx="527.6" cy="345.0" r="2.3" fill="#20C020"/>
<circle cx="532.3" cy="345.0" r="2.3" fill="#F08020"/>
<rect x="406.0" y="375.5" width="6" height="18" fill="#000"/><rect x="407.0" y="382.5" width="4" height="4" fill="#fff" stroke="#2020E0"/>
<rect x="414.0" y="381.0" width="26" height="7" fill="#000"/>
<circle cx="417.5" cy="384.5" r="2.3" fill="#F08020"/>
<circle cx="422.2" cy="384.5" r="2.3" fill="#E01818"/>
<circle cx="426.9" cy="384.5" r="2.3" fill="#fff"/>
<circle cx="431.6" cy="384.5" r="2.3" fill="#20C020"/>
<circle cx="436.3" cy="384.5" r="2.3" fill="#F08020"/>
<rect x="316.0" y="415.0" width="6" height="20" fill="#000"/><rect x="317.0" y="423.0" width="4" height="4" fill="#fff" stroke="#2020E0"/>
<rect x="328.0" y="419.5" width="26" height="7" fill="#000"/>
<circle cx="331.5" cy="423.0" r="2.3" fill="#F08020"/>
<circle cx="336.2" cy="423.0" r="2.3" fill="#E01818"/>
<circle cx="340.9" cy="423.0" r="2.3" fill="#fff"/>
<circle cx="345.6" cy="423.0" r="2.3" fill="#20C020"/>
<circle cx="350.3" cy="423.0" r="2.3" fill="#F08020"/>
<path d="M325 461.5 H624" stroke="#000" stroke-width="2.6"/>
<rect x="317.0" y="453.0" width="10" height="8" fill="#202040"/><rect x="319.0" y="454.0" width="5" height="5" fill="#fff" stroke="#2020E0"/>
<rect x="416.0" y="453.0" width="10" height="8" fill="#202040"/><rect x="418.0" y="454.0" width="5" height="5" fill="#fff" stroke="#2020E0"/>
<rect x="518.5" y="452.5" width="10" height="8" fill="#202040"/><rect x="520.5" y="453.5" width="5" height="5" fill="#fff" stroke="#2020E0"/>
<rect x="620.0" y="451.0" width="10" height="8" fill="#202040"/><rect x="622.0" y="452.0" width="5" height="5" fill="#fff" stroke="#2020E0"/>
<rect x="318" y="455" width="8" height="8" fill="#1010E0"/>
<rect x="292.5" y="457" width="17" height="5" fill="#000"/><rect x="294" y="458" width="5" height="3" fill="#1010E0"/><rect x="300" y="458" width="4" height="3" fill="#fff"/><rect x="304.5" y="458" width="3" height="3" fill="#fff"/>
<rect x="696" y="455" width="16" height="6" fill="#000"/><rect x="697" y="456" width="6" height="4" fill="#1010E0"/><rect x="704" y="456" width="3" height="4" fill="#fff"/><rect x="708" y="456" width="3" height="4" fill="#fff"/>
<path d="M884 338 L893 359" stroke="#000" stroke-width="6"/><rect x="886" y="346" width="4" height="4" fill="#fff"/>
<path d="M901 373 L910 394" stroke="#000" stroke-width="6"/><rect x="903" y="381" width="4" height="4" fill="#fff"/>
<g transform="translate(609.0 403.0) rotate(-65.0)"><rect x="-9" y="-3.5" width="18" height="7" fill="#000"/><rect x="-6" y="-2" width="4" height="4" fill="#fff" stroke="#2020E0"/><rect x="1" y="-2" width="4" height="4" fill="#8080F0"/></g>
<g transform="translate(706.0 401.0) rotate(-65.0)"><rect x="-9" y="-3.5" width="18" height="7" fill="#000"/><rect x="-6" y="-2" width="4" height="4" fill="#fff" stroke="#2020E0"/><rect x="1" y="-2" width="4" height="4" fill="#8080F0"/></g>
<g transform="translate(808.0 404.0) rotate(-65.0)"><rect x="-9" y="-3.5" width="18" height="7" fill="#000"/><rect x="-6" y="-2" width="4" height="4" fill="#fff" stroke="#2020E0"/><rect x="1" y="-2" width="4" height="4" fill="#8080F0"/></g>
<g transform="translate(600.0 360.0) rotate(-60.0)"><rect x="-9" y="-3.5" width="18" height="7" fill="#000"/><rect x="-6" y="-2" width="4" height="4" fill="#fff" stroke="#2020E0"/><rect x="1" y="-2" width="4" height="4" fill="#8080F0"/></g>
<g transform="translate(506.0 398.0) rotate(-60.0)"><rect x="-9" y="-3.5" width="18" height="7" fill="#000"/><rect x="-6" y="-2" width="4" height="4" fill="#fff" stroke="#2020E0"/><rect x="1" y="-2" width="4" height="4" fill="#8080F0"/></g>
<g transform="translate(498.0 410.0) rotate(-60.0)"><rect x="-9" y="-3.5" width="18" height="7" fill="#000"/><rect x="-6" y="-2" width="4" height="4" fill="#fff" stroke="#2020E0"/><rect x="1" y="-2" width="4" height="4" fill="#8080F0"/></g>
<rect x="595" y="355" width="9" height="9" fill="#1010E0"/>
<rect x="688" y="317" width="9" height="10" fill="#000"/><rect x="690" y="318" width="5" height="6" fill="#3030C0"/>
<path d="M674 286 L681 298" stroke="#000" stroke-width="2.5"/>
<rect x="480" y="408" width="9" height="6" fill="#1010E0" transform="rotate(-22 484 411)"/>
<rect x="424.5" y="430.0" width="5" height="4" fill="#fff" stroke="#1010D0" stroke-width="1.1"/>
<rect x="606.5" y="379.0" width="5" height="4" fill="#fff" stroke="#1010D0" stroke-width="1.1"/>
<g transform="translate(793.0 182.0) rotate(21.0)"><rect x="-7" y="-10" width="14" height="20" fill="#A8A8A8" stroke="#000"/><circle cx="0" cy="-5" r="3.6" fill="#E01010"/><circle cx="0" cy="5" r="3.6" fill="#E01010"/><circle cx="3" cy="0.5" r="3.3" fill="#fff"/><rect x="-2" y="-2" width="4" height="4" fill="#fff" stroke="#2020E0"/></g>
<g transform="translate(856.0 144.0) rotate(31.0)"><rect x="-7" y="-10" width="14" height="20" fill="#A8A8A8" stroke="#000"/><circle cx="0" cy="-5" r="3.6" fill="#E01010"/><circle cx="0" cy="5" r="3.6" fill="#E01010"/><circle cx="3" cy="0.5" r="3.3" fill="#fff"/><rect x="-2" y="-2" width="4" height="4" fill="#fff" stroke="#2020E0"/></g>
<polygon points="847.3,242 894,224.4 909.8,259.8 863,277" fill="#7E7E7E" stroke="#000"/>
<circle cx="869" cy="253.5" r="1.8" fill="none" stroke="#000" stroke-width="0.8"/>
<polygon points="755.6,302.5 860.8,257.7 889,324.4 783.75,369.2" fill="#7E7E7E" stroke="#000" stroke-width="1.2"/>
<path d="M755.6 302.5 L860.8 257.7" stroke="#000" stroke-width="2.2"/>
<path d="M783.75 291 L815 354.6 M777.5 350.4 L808.75 340 M796 323 L908.75 278.5" fill="none" stroke="#000" stroke-width="0.9"/>
<polygon points="806,315 823.5,307.7 827,316.5 809.5,323.8" fill="none" stroke="#000" stroke-width="0.9"/>
<polygon points="839,301 857,293.7 860.5,302.5 842.5,309.8" fill="none" stroke="#000" stroke-width="0.9"/>
<polygon points="858.75,274.4 896.25,258.75 914,297.3 875.4,314" fill="#7E7E7E" stroke="#000" stroke-width="1.2"/>
<path d="M858.75 274.4 L896.25 258.75" stroke="#000" stroke-width="2"/><path d="M866 292 L908.75 278.5" stroke="#000" stroke-width="0.9"/>
<path d="M875 328 L884 332 M880 325 L883 334" stroke="#000" stroke-width="1.5"/>
<path d="M754 312 L762 309 M755 316 L763 313 M756 320 L764 317" stroke="#000" stroke-width="1.2"/>
<text x="0" y="0" transform="translate(762.0 312.7) rotate(-22.0)" font-size="21.5" fill="#137543" text-anchor="middle" dominant-baseline="central">F 120161</text>
<rect x="760.5" y="320.0" width="5" height="4" fill="#fff" stroke="#1010D0" stroke-width="1.1"/>
<text x="0" y="0" transform="translate(491.0 99.7) rotate(0.0)" font-size="20" fill="#000" text-anchor="middle" dominant-baseline="central">170 cm</text>
<rect x="488.5" y="108.5" width="5" height="4" fill="#fff" stroke="#1010D0" stroke-width="1.1"/>
<rect x="918.5" y="285.0" width="5" height="4" fill="#fff" stroke="#1010D0" stroke-width="1.1"/>
<rect x="170.0" y="462.6" width="5" height="4" fill="#fff" stroke="#1010D0" stroke-width="1.1"/>
<rect x="57.5" y="285.0" width="5" height="4" fill="#fff" stroke="#1010D0" stroke-width="1.1"/>
<rect x="56.0" y="289.5" width="5" height="4" fill="#fff" stroke="#1010D0" stroke-width="1.1"/>
<text x="0" y="0" transform="translate(174.0 475.7) rotate(180.0)" font-size="20" fill="#000" text-anchor="middle" dominant-baseline="central">46 cm</text>
<text x="0" y="0" transform="translate(47.0 292.7) rotate(-90.0)" font-size="20" fill="#000" text-anchor="middle" dominant-baseline="central">70 cm</text>
<rect x="31" y="270" width="6" height="27" fill="#202020"/><rect x="36" y="274" width="4" height="22" fill="#909090" stroke="#000" stroke-width="0.8"/>
<text x="0" y="0" transform="translate(880.0 126.7) rotate(-90.0)" font-size="20" fill="#137543" text-anchor="middle" dominant-baseline="central">Trafo 4H0</text>
<rect x="882" y="121" width="15" height="15" fill="#B02020" stroke="#802020"/>
<line x1="60.0" y1="173.0" x2="60.0" y2="207.0" stroke="#000" stroke-width="1.3"/>
<line x1="162.0" y1="173.0" x2="162.0" y2="207.0" stroke="#000" stroke-width="1.3"/>
<line x1="264.0" y1="173.0" x2="264.0" y2="207.0" stroke="#000" stroke-width="1.3"/>
<line x1="308.6" y1="183.0" x2="305.0" y2="215.0" stroke="#000" stroke-width="1.3"/>
<line x1="357.4" y1="204.7" x2="345.7" y2="230.0" stroke="#000" stroke-width="1.3"/>
<line x1="400.4" y1="232.0" x2="394.5" y2="253.5" stroke="#000" stroke-width="1.3"/>
<line x1="441.4" y1="236.0" x2="441.4" y2="268.0" stroke="#000" stroke-width="1.3"/>
<line x1="484.0" y1="230.0" x2="492.0" y2="255.5" stroke="#000" stroke-width="1.3"/>
<line x1="529.0" y1="208.6" x2="539.0" y2="232.0" stroke="#000" stroke-width="1.3"/>
<line x1="609.0" y1="146.0" x2="626.0" y2="171.0" stroke="#000" stroke-width="1.3"/>
<line x1="657.6" y1="122.6" x2="665.0" y2="151.6" stroke="#000" stroke-width="1.3"/>
<line x1="708.0" y1="113.0" x2="709.0" y2="146.0" stroke="#000" stroke-width="1.3"/>
<line x1="759.6" y1="119.3" x2="753.0" y2="149.4" stroke="#000" stroke-width="1.3"/>
<line x1="809.0" y1="135.4" x2="796.0" y2="164.4" stroke="#000" stroke-width="1.3"/>
<line x1="893.0" y1="193.0" x2="877.0" y2="222.0" stroke="#000" stroke-width="1.3"/>
<text x="0" y="0" transform="translate(59.0 180.5) rotate(0.0)" font-size="20.2" fill="#137543" text-anchor="middle" dominant-baseline="central">klStrBr H0</text>
<text x="0" y="0" transform="translate(162.0 180.5) rotate(0.0)" font-size="20.2" fill="#137543" text-anchor="middle" dominant-baseline="central">klStrBr H0</text>
<text x="0" y="0" transform="translate(264.0 181.7) rotate(2.0)" font-size="20.2" fill="#137543" text-anchor="middle" dominant-baseline="central">klStrBr H0</text>
<text x="0" y="0" transform="translate(308.0 198.7) rotate(16.0)" font-size="20.2" fill="#137543" text-anchor="middle" dominant-baseline="central">No 21350</text>
<text x="0" y="0" transform="translate(403.5 222.2) rotate(17.0)" font-size="20.2" fill="#137543" text-anchor="middle" dominant-baseline="central">No 21350</text>
<text x="0" y="0" transform="translate(482.0 222.2) rotate(-17.0)" font-size="20.2" fill="#137543" text-anchor="middle" dominant-baseline="central">No 21350</text>
<text x="0" y="0" transform="translate(547.0 196.7) rotate(-33.0)" font-size="20.2" fill="#137543" text-anchor="middle" dominant-baseline="central">Br H0</text>
<text x="0" y="0" transform="translate(661.0 139.7) rotate(-15.0)" font-size="20.2" fill="#137543" text-anchor="middle" dominant-baseline="central">No 21350</text>
<text x="0" y="0" transform="translate(756.0 136.7) rotate(15.0)" font-size="20.2" fill="#137543" text-anchor="middle" dominant-baseline="central">No 21350</text>
<text x="0" y="0" transform="translate(893.0 192.7) rotate(27.0)" font-size="20.2" fill="#137543" text-anchor="middle" dominant-baseline="central">klStrBr H0</text>
<rect x="56.2" y="188.0" width="5" height="4" fill="#fff" stroke="#1010D0" stroke-width="1.1"/>
<rect x="159.5" y="188.0" width="5" height="4" fill="#fff" stroke="#1010D0" stroke-width="1.1"/>
<rect x="262.0" y="188.8" width="5" height="4" fill="#fff" stroke="#1010D0" stroke-width="1.1"/>
<rect x="302.5" y="206.0" width="5" height="4" fill="#fff" stroke="#1010D0" stroke-width="1.1"/>
<rect x="395.5" y="229.0" width="5" height="4" fill="#fff" stroke="#1010D0" stroke-width="1.1"/>
<rect x="438.5" y="235.0" width="5" height="4" fill="#fff" stroke="#1010D0" stroke-width="1.1"/>
<rect x="481.5" y="229.5" width="5" height="4" fill="#fff" stroke="#1010D0" stroke-width="1.1"/>
<rect x="528.8" y="215.0" width="5" height="4" fill="#fff" stroke="#1010D0" stroke-width="1.1"/>
<rect x="661.5" y="145.6" width="5" height="4" fill="#fff" stroke="#1010D0" stroke-width="1.1"/>
<rect x="751.3" y="142.3" width="5" height="4" fill="#fff" stroke="#1010D0" stroke-width="1.1"/>
<rect x="800.1" y="148.5" width="5" height="4" fill="#fff" stroke="#1010D0" stroke-width="1.1"/>
<rect x="887.5" y="199.0" width="5" height="4" fill="#fff" stroke="#1010D0" stroke-width="1.1"/>
<text x="0" y="0" transform="translate(179.0 262.7) rotate(0.0)" font-size="20.5" fill="#137543" text-anchor="middle" dominant-baseline="central">Vo 3510</text></svg></div>
<div id="vscroll" class="a"></div>
<div id="hscroll" class="a"></div>
<div id="corner" class="a"></div>
<div id="btool" class="a"></div>
<div id="status" class="a">
  <span style="left:2px">Stiskni</span>
  <span style="left:588px">&lt;-- Trafo 4H0/0mm/Vrstva 4</span>
  <span style="left:869px">&lt;- 768 -&gt;</span>
  <span style="left:936px">+00003</span>
  <span style="left:982px">-00297</span>
</div>
<svg class="a" style="left:0;top:0" width="1024" height="768"><defs><linearGradient id="fwg" x1="0" y1="0" x2="0" y2="1"><stop offset="0" stop-color="#7FA0EC"/><stop offset="1" stop-color="#6A8EE0"/></linearGradient></defs><defs><linearGradient id="sbg" x1="0" y1="0" x2="1" y2="1"><stop offset="0" stop-color="#DCE6FC"/><stop offset="1" stop-color="#B4C8F4"/></linearGradient></defs><rect x="1004" y="78" width="20" height="589" fill="#F3F2EC"/><rect x="1004" y="78" width="2" height="589" fill="#FBFBF8"/><rect x="1021" y="78" width="3" height="606" fill="#ECE9D8"/><rect x="1006.0" y="79.0" width="15" height="16" rx="2" fill="#C8D8FA" stroke="#fff"/><rect x="1006.5" y="79.5" width="14" height="15" rx="2" fill="url(#sbg)"/><path d="M1009.5 89.0 L1013.5 85.0 L1017.5 89.0" fill="none" stroke="#4D6185" stroke-width="2"/><rect x="1006.0" y="367.5" width="15" height="14" rx="2" fill="#C8D8FA" stroke="#fff"/><rect x="1006.5" y="368.0" width="14" height="13" rx="2" fill="url(#sbg)"/><path d="M1009 372.5H1017 M1009 374.5H1017 M1009 376.5H1017" stroke="#9AB0E8"/><rect x="1006.0" y="650.5" width="15" height="16" rx="2" fill="#C8D8FA" stroke="#fff"/><rect x="1006.5" y="651.0" width="14" height="15" rx="2" fill="url(#sbg)"/><path d="M1009.5 656.5 L1013.5 660.5 L1017.5 656.5" fill="none" stroke="#4D6185" stroke-width="2"/><defs><linearGradient id="hsg" x1="0" y1="0" x2="0" y2="1"><stop offset="0" stop-color="#EDECE4"/><stop offset="1" stop-color="#FCFCF9"/></linearGradient></defs><rect x="31" y="667" width="973" height="17" fill="url(#hsg)"/><rect x="0" y="683" width="1004" height="1" fill="#E4E1D2"/><rect x="502.5" y="668.5" width="34" height="15" rx="2" fill="#C8D8FA" stroke="#fff"/><rect x="503.0" y="669.0" width="33" height="14" rx="2" fill="url(#sbg)"/><path d="M514 672V680 M516 672V680 M518 672V680 M520 672V680 M522 672V680" stroke="#9AB0E8"/><rect x="988.5" y="668.5" width="15" height="15" rx="2" fill="#C8D8FA" stroke="#fff"/><rect x="989.0" y="669.0" width="14" height="14" rx="2" fill="url(#sbg)"/><path d="M994.0 672.0 L998.0 676.0 L994.0 680.0" fill="none" stroke="#4D6185" stroke-width="2"/><rect x="1004" y="667" width="20" height="17" fill="#ECE9D8"/><line x1="0" y1="684.5" x2="1024" y2="684.5" stroke="#fff"/><line x1="3.5" y1="688" x2="3.5" y2="712" stroke="#C5C2B2" stroke-width="2"/><rect x="14.0" y="690.5" width="19" height="20" rx="3" fill="#FCFCFA" stroke="#C8C6BA"/><rect x="16.5" y="693" width="14" height="14" fill="#C8C8C8"/><path d="M16.5 707.5 H30.5 V693" fill="none" stroke="#000" stroke-width="1.3"/><text x="23.5" y="705" font-size="11" fill="#2020C0" text-anchor="middle" font-family="Liberation Sans">1</text><rect x="37.0" y="690.5" width="19" height="20" rx="3" fill="#FCFCFA" stroke="#C8C6BA"/><rect x="39.5" y="693" width="14" height="14" fill="#C8C8C8"/><path d="M39.5 707.5 H53.5 V693" fill="none" stroke="#000" stroke-width="1.3"/><text x="46.5" y="705" font-size="11" fill="#2020C0" text-anchor="middle" font-family="Liberation Sans">2</text><rect x="60.1" y="690.5" width="19" height="20" rx="3" fill="#FCFCFA" stroke="#C8C6BA"/><rect x="62.6" y="693" width="14" height="14" fill="#C8C8C8"/><path d="M62.6 707.5 H76.6 V693" fill="none" stroke="#000" stroke-width="1.3"/><text x="69.6" y="705" font-size="11" fill="#2020C0" text-anchor="middle" font-family="Liberation Sans">3</text><rect x="83.2" y="690.5" width="19" height="20" rx="3" fill="#FCFCFA" stroke="#C8C6BA"/><rect x="85.7" y="693" width="14" height="14" fill="#C8C8C8"/><path d="M85.7 707.5 H99.7 V693" fill="none" stroke="#000" stroke-width="1.3"/><text x="92.7" y="705" font-size="11" fill="#2020C0" text-anchor="middle" font-family="Liberation Sans">4</text><rect x="106.2" y="690.5" width="19" height="20" rx="3" fill="#FCFCFA" stroke="#C8C6BA"/><rect x="108.7" y="693" width="14" height="14" fill="#C8C8C8"/><path d="M108.7 707.5 H122.7 V693" fill="none" stroke="#000" stroke-width="1.3"/><text x="115.7" y="705" font-size="11" fill="#2020C0" text-anchor="middle" font-family="Liberation Sans">5</text><rect x="129.2" y="690.5" width="19" height="20" rx="3" fill="#FCFCFA" stroke="#C8C6BA"/><rect x="131.8" y="693" width="14" height="14" fill="#C8C8C8"/><path d="M131.8 707.5 H145.8 V693" fill="none" stroke="#000" stroke-width="1.3"/><text x="138.8" y="705" font-size="11" fill="#2020C0" text-anchor="middle" font-family="Liberation Sans">6</text><rect x="152.3" y="690.5" width="19" height="20" rx="3" fill="#FCFCFA" stroke="#C8C6BA"/><rect x="154.8" y="693" width="14" height="14" fill="#C8C8C8"/><path d="M154.8 707.5 H168.8 V693" fill="none" stroke="#000" stroke-width="1.3"/><text x="161.8" y="705" font-size="11" fill="#2020C0" text-anchor="middle" font-family="Liberation Sans">7</text><rect x="175.3" y="690.5" width="19" height="20" rx="3" fill="#FCFCFA" stroke="#C8C6BA"/><rect x="177.8" y="693" width="14" height="14" fill="#C8C8C8"/><path d="M177.8 707.5 H191.8 V693" fill="none" stroke="#000" stroke-width="1.3"/><text x="184.8" y="705" font-size="11" fill="#2020C0" text-anchor="middle" font-family="Liberation Sans">8</text><rect x="198.4" y="690.5" width="19" height="20" rx="3" fill="#FCFCFA" stroke="#C8C6BA"/><rect x="200.9" y="693" width="14" height="14" fill="#C8C8C8"/><path d="M200.9 707.5 H214.9 V693" fill="none" stroke="#000" stroke-width="1.3"/><text x="207.9" y="705" font-size="11" fill="#2020C0" text-anchor="middle" font-family="Liberation Sans">9</text><rect x="221.5" y="690.5" width="19" height="20" rx="3" fill="#FCFCFA" stroke="#C8C6BA"/><rect x="224.0" y="693" width="14" height="14" fill="#C8C8C8"/><path d="M224.0 707.5 H238.0 V693" fill="none" stroke="#000" stroke-width="1.3"/><text x="231.0" y="705" font-size="11" fill="#2020C0" text-anchor="middle" font-family="Liberation Sans">10</text><rect x="244.5" y="690.5" width="19" height="20" rx="3" fill="#FCFCFA" stroke="#C8C6BA"/><rect x="247.0" y="693" width="14" height="14" fill="#C8C8C8"/><path d="M247.0 707.5 H261.0 V693" fill="none" stroke="#000" stroke-width="1.3"/><text x="254.0" y="705" font-size="11" fill="#2020C0" text-anchor="middle" font-family="Liberation Sans">11</text><rect x="267.6" y="690.5" width="19" height="20" rx="3" fill="#FCFCFA" stroke="#C8C6BA"/><rect x="270.1" y="693" width="14" height="14" fill="#C8C8C8"/><path d="M270.1 707.5 H284.1 V693" fill="none" stroke="#000" stroke-width="1.3"/><text x="277.1" y="705" font-size="11" fill="#2020C0" text-anchor="middle" font-family="Liberation Sans">12</text><rect x="290.6" y="690.5" width="19" height="20" rx="3" fill="#FCFCFA" stroke="#C8C6BA"/><rect x="293.1" y="693" width="14" height="14" fill="#C8C8C8"/><path d="M293.1 707.5 H307.1 V693" fill="none" stroke="#000" stroke-width="1.3"/><text x="300.1" y="705" font-size="11" fill="#2020C0" text-anchor="middle" font-family="Liberation Sans">13</text><rect x="313.7" y="690.5" width="19" height="20" rx="3" fill="#FCFCFA" stroke="#C8C6BA"/><rect x="316.2" y="693" width="14" height="14" fill="#C8C8C8"/><path d="M316.2 707.5 H330.2 V693" fill="none" stroke="#000" stroke-width="1.3"/><text x="323.2" y="705" font-size="11" fill="#2020C0" text-anchor="middle" font-family="Liberation Sans">14</text><rect x="336.7" y="690.5" width="19" height="20" rx="3" fill="#FCFCFA" stroke="#C8C6BA"/><rect x="339.2" y="693" width="14" height="14" fill="#C8C8C8"/><path d="M339.2 707.5 H353.2 V693" fill="none" stroke="#000" stroke-width="1.3"/><text x="346.2" y="705" font-size="11" fill="#2020C0" text-anchor="middle" font-family="Liberation Sans">15</text><rect x="359.8" y="690.5" width="19" height="20" rx="3" fill="#FCFCFA" stroke="#C8C6BA"/><rect x="362.2" y="693" width="14" height="14" fill="#C8C8C8"/><path d="M362.2 707.5 H376.2 V693" fill="none" stroke="#000" stroke-width="1.3"/><text x="369.2" y="705" font-size="11" fill="#2020C0" text-anchor="middle" font-family="Liberation Sans">16</text><rect x="382.8" y="690.5" width="19" height="20" rx="3" fill="#FCFCFA" stroke="#C8C6BA"/><rect x="385.3" y="693" width="14" height="14" fill="#C8C8C8"/><path d="M385.3 707.5 H399.3 V693" fill="none" stroke="#000" stroke-width="1.3"/><text x="392.3" y="705" font-size="11" fill="#2020C0" text-anchor="middle" font-family="Liberation Sans">17</text><rect x="405.9" y="690.5" width="19" height="20" rx="3" fill="#FCFCFA" stroke="#C8C6BA"/><rect x="408.4" y="693" width="14" height="14" fill="#C8C8C8"/><path d="M408.4 707.5 H422.4 V693" fill="none" stroke="#000" stroke-width="1.3"/><text x="415.4" y="705" font-size="11" fill="#2020C0" text-anchor="middle" font-family="Liberation Sans">18</text><rect x="428.9" y="690.5" width="19" height="20" rx="3" fill="#FCFCFA" stroke="#C8C6BA"/><rect x="431.4" y="693" width="14" height="14" fill="#C8C8C8"/><path d="M431.4 707.5 H445.4 V693" fill="none" stroke="#000" stroke-width="1.3"/><text x="438.4" y="705" font-size="11" fill="#2020C0" text-anchor="middle" font-family="Liberation Sans">19</text><rect x="452.4" y="693" width="14" height="14" fill="#DCDCF0"/><text x="459.4" y="705" font-size="11" fill="#2020C0" text-anchor="middle" font-family="Liberation Sans" letter-spacing="-1">20</text><path d="M453.9 697 H461.9" stroke="#000"/><path d="M484.0 706.0 L487.0 703.0 H499.0 L496.0 706.0Z" fill="#2030C0" stroke="#000" stroke-width="0.8"/><path d="M484.0 702.5 L487.0 699.5 H499.0 L496.0 702.5Z" fill="#E8E020" stroke="#000" stroke-width="0.8"/><path d="M484.0 699.0 L487.0 696.0 H499.0 L496.0 699.0Z" fill="#E02020" stroke="#000" stroke-width="0.8"/><path d="M484.0 695.5 L487.0 692.5 H499.0 L496.0 695.5Z" fill="#108030" stroke="#000" stroke-width="0.8"/><path d="M484.0 692.0 L487.0 689.0 H499.0 L496.0 692.0Z" fill="#103020" stroke="#000" stroke-width="0.8"/><path d="M507 706 L510 703 H522 L519 706Z M507 695 L510 692 H522 L519 695Z" fill="none" stroke="#B0B0A8"/><path d="M507 700 L510 697 H522 L519 700Z" fill="#E02020" stroke="#903030" stroke-width="0.8"/><path d="M515 690 V708" stroke="#B0B0A8"/><path d="M530 706 L533 703 H545 L542 706Z" fill="none" stroke="#B0B0A8"/><path d="M530 695 L533 692 H545 L542 695Z" fill="#B0B0A8"/><path d="M538 695 V708" stroke="#B0B0A8"/><path d="M561.0 706.0 L564.0 703.0 H576.0 L573.0 706.0Z" fill="#202020" stroke="#000" stroke-width="0.8"/><path d="M561.0 702.5 L564.0 699.5 H576.0 L573.0 702.5Z" fill="#20A040" stroke="#000" stroke-width="0.8"/><path d="M561.0 699.0 L564.0 696.0 H576.0 L573.0 699.0Z" fill="#40D0E0" stroke="#000" stroke-width="0.8"/><path d="M561.0 695.5 L564.0 692.5 H576.0 L573.0 695.5Z" fill="#E8E020" stroke="#000" stroke-width="0.8"/><text x="572" y="708" font-size="10" font-weight="bold" fill="#2020C0" font-family="Liberation Sans">?</text><rect x="592.5" y="692.5" width="15" height="15" fill="none" stroke="#B8B6A8"/><rect x="594.5" y="694.5" width="11" height="11" fill="none" stroke="#C8C6B8"/><text x="600.0" y="704.5" font-size="9" fill="#B0AEA0" text-anchor="middle" font-family="Liberation Sans">1</text><rect x="615.5" y="692.5" width="15" height="15" fill="none" stroke="#B8B6A8"/><rect x="617.5" y="694.5" width="11" height="11" fill="none" stroke="#C8C6B8"/><text x="623.0" y="704.5" font-size="9" fill="#B0AEA0" text-anchor="middle" font-family="Liberation Sans">2</text><rect x="638.5" y="692.5" width="15" height="15" fill="none" stroke="#B8B6A8"/><rect x="640.5" y="694.5" width="11" height="11" fill="none" stroke="#C8C6B8"/><text x="646.0" y="704.5" font-size="9" fill="#B0AEA0" text-anchor="middle" font-family="Liberation Sans">3</text><rect x="661.5" y="692.5" width="15" height="15" fill="none" stroke="#B8B6A8"/><rect x="663.5" y="694.5" width="11" height="11" fill="none" stroke="#C8C6B8"/><text x="669.0" y="704.5" font-size="9" fill="#B0AEA0" text-anchor="middle" font-family="Liberation Sans">4</text><rect x="684.5" y="692.5" width="15" height="15" fill="none" stroke="#B8B6A8"/><rect x="686.5" y="694.5" width="11" height="11" fill="none" stroke="#C8C6B8"/><text x="692.0" y="704.5" font-size="9" fill="#B0AEA0" text-anchor="middle" font-family="Liberation Sans">5</text><line x1="476.5" y1="688" x2="476.5" y2="712" stroke="#C5C2B2"/><line x1="477.5" y1="688" x2="477.5" y2="712" stroke="#fff"/><line x1="554.0" y1="688" x2="554.0" y2="712" stroke="#C5C2B2"/><line x1="555.0" y1="688" x2="555.0" y2="712" stroke="#fff"/><line x1="584.5" y1="688" x2="584.5" y2="712" stroke="#C5C2B2"/><line x1="585.5" y1="688" x2="585.5" y2="712" stroke="#fff"/><line x1="710" y1="686" x2="710" y2="714" stroke="#C5C2B2"/><line x1="711" y1="686" x2="711" y2="714" stroke="#fff"/><line x1="0" y1="716.5" x2="1024" y2="716.5" stroke="#C5C2B2"/><line x1="0" y1="717.5" x2="1024" y2="717.5" stroke="#fff"/><line x1="863.5" y1="719" x2="863.5" y2="733" stroke="#C5C2B2"/><line x1="864.5" y1="719" x2="864.5" y2="733" stroke="#fff"/><line x1="930.5" y1="719" x2="930.5" y2="733" stroke="#C5C2B2"/><line x1="931.5" y1="719" x2="931.5" y2="733" stroke="#fff"/><line x1="977.5" y1="719" x2="977.5" y2="733" stroke="#C5C2B2"/><line x1="978.5" y1="719" x2="978.5" y2="733" stroke="#fff"/><rect x="34" y="608" width="106" height="130" fill="#7D9CE8"/><rect x="34" y="608" width="106" height="21" fill="url(#fwg)"/><text x="38" y="625" font-size="12" font-weight="bold" fill="#D0DCF8" font-family="Liberation Sans" letter-spacing="-0.2">Výběr kolejiva</text><rect x="121.5" y="614.5" width="13" height="12" fill="#C88A8A" stroke="#fff"/><path d="M125 618 L131 624 M131 618 L125 624" stroke="#fff" stroke-width="2"/><rect x="38" y="630" width="97" height="108" fill="#ECE9D8"/><rect x="38.5" y="630.5" width="96" height="20" fill="#fff" stroke="#7F9DB9"/><text x="42" y="645" font-size="11.5" fill="#000" font-family="Liberation Sans" letter-spacing="-0.3">Roco geoLINE</text><rect x="119" y="632" width="15" height="17" rx="1" fill="#C4D2F4"/><path d="M123 638 L126.5 642 L130 638" fill="none" stroke="#4D6185" stroke-width="2"/><path d="M48 662 H51 M51 664 H62 V666" fill="none" stroke="#000" stroke-width="1.3"/><path d="M70 666 V664 H75 L82 660 H86 V662" fill="none" stroke="#000" stroke-width="1.3"/><path d="M92 665 H98 L104 661 H106 V666 M98 665 H106" fill="none" stroke="#000" stroke-width="1.3"/><circle cx="121" cy="665" r="6" fill="#808080" stroke="#000" stroke-width="1.3"/><path d="M113 665H129 M119 663H123V666H119Z" stroke="#000"/><path d="M49 693 V681 H54 M49 686 H53 M47 693 H52" fill="none" stroke="#000" stroke-width="1.4"/><path d="M53 688 L58 684 L63 688 V693 H53Z" fill="#808080" stroke="#000"/><circle cx="70" cy="682" r="3" fill="#30B030"/><path d="M70 684 V694 M73 690 Q76 684 80 686 V694 M78 694 H82" fill="none" stroke="#000" stroke-width="1.3"/><rect x="91.5" y="680.5" width="14" height="8" fill="#F0F0C0" stroke="#000" stroke-width="1.4"/><rect x="97.5" y="688.5" width="8" height="5" fill="#F0F0C0" stroke="#000" stroke-width="1.4"/><path d="M114 681 H124 V685 H128 V689 H114Z" fill="#208020"/><rect x="114" y="681" width="8" height="5" fill="#A02020"/><path d="M113 694 V692 H129 V694" fill="none" stroke="#000" stroke-width="1.3"/><circle cx="53" cy="708" r="5" fill="#A0A0A0" stroke="#000"/><path d="M47 719 L62 702" stroke="#000"/><path d="M56 716 L62 707 L64 709 L58 718Z" fill="#E8C020" stroke="#000" stroke-width="0.8"/><path d="M77 704 L73 709 H81Z" fill="#000"/><rect x="76" y="709" width="2" height="4" fill="#000"/><rect x="71.5" y="713.5" width="12" height="4" fill="#fff" stroke="#000"/><rect x="94.5" y="703.5" width="12" height="4" fill="#fff" stroke="#000"/><rect x="99" y="708" width="2" height="4" fill="#000"/><path d="M96 712 L100 717 L104 712Z" fill="#000"/><text x="111" y="716" font-size="12" font-weight="bold" fill="#1010B0" font-family="Liberation Sans" font-style="italic">3D</text><rect x="42.5" y="727.5" width="88" height="12" rx="3" fill="#fff" stroke="#3C5A9C"/><path d="M46 734 H56 M60 734 H72" stroke="#000" stroke-width="1.3"/></svg>
<div id="task" class="a">
  <div class="a" style="left:0;top:4px;width:98px;height:30px;border-radius:0 12px 12px 0;background:linear-gradient(#58AC58 0%,#3E9C3E 12%,#2F8E2F 45%,#2C8A2C 80%,#237023 100%);box-shadow:inset -2px 0 2px rgba(0,0,0,0.25)"></div>
  <svg class="a" style="left:10px;top:11px" width="20" height="20"><path d="M2.5 2.5 Q5 1 9 2.5 L8 8.5 Q5 7 1.5 8.5Z" fill="#E8542A"/><path d="M10 2.5 Q13.5 1 17.5 2.5 L16.5 8.5 Q13 7 9 8.5Z" fill="#6CBE3C"/><path d="M1.5 9.5 Q4.5 8 8 9.5 L7 15.5 Q4 14 0.5 15.5Z" fill="#2A78E0"/><path d="M9 9.5 Q12.5 8 16.5 9.5 L15.5 15.5 Q12 14 8 15.5Z" fill="#F8C82C"/></svg>
  <div class="a" style="left:35px;top:10px;color:#fff;font-size:17px;font-weight:bold;font-style:italic;text-shadow:1px 1px 1px #1A4A1A">Start</div>
  <svg class="a" style="left:106px;top:8px" width="8" height="26"><g fill="#1A3FA8"><rect x="2" y="2" width="2" height="2"/><rect x="2" y="6" width="2" height="2"/><rect x="2" y="10" width="2" height="2"/><rect x="2" y="14" width="2" height="2"/><rect x="2" y="18" width="2" height="2"/></g><g fill="#6A9AF0"><rect x="3" y="3" width="1" height="1"/><rect x="3" y="7" width="1" height="1"/><rect x="3" y="11" width="1" height="1"/><rect x="3" y="15" width="1" height="1"/><rect x="3" y="19" width="1" height="1"/></g></svg>
  <div class="a tbtn" style="left:118px;width:159px;background:linear-gradient(#5A9CF8,#3C81F3 20%,#3A7CEE 80%,#2E68D8);border:1px solid #2A5ED0">Diskuzní fórum Model...</div>
  <svg class="a" style="left:127px;top:11px" width="16" height="16"><circle cx="8" cy="8" r="7" fill="#E86A18"/><circle cx="8.5" cy="7.5" r="4.5" fill="#3050B0"/><path d="M1 8 Q2 2 8 1 Q14 2 15 8 Q13 4 9 4 Q5 5 5 9 Q6 13 11 13 Q5 15 1 8Z" fill="#F8A020"/></svg>
  <div class="a tbtn" style="left:281px;width:155px;background:linear-gradient(#1A48B0,#1E4AB8 20%,#1F4EBE 80%,#2452C4);border:1px solid #183C98">WINTRACK 8.0 - [SSSS]</div>
  <svg class="a" style="left:288px;top:11px" width="18" height="16"><rect x="1" y="8" width="14" height="2" fill="#C02020"/><rect x="1" y="11" width="14" height="2" fill="#203080"/><rect x="2" y="14" width="12" height="2" fill="#C02020"/><rect x="8" y="2" width="8" height="8" fill="#fff" stroke="#203080"/><rect x="11" y="4" width="3" height="4" fill="#203080"/><path d="M1 8 L8 5" stroke="#F0E040" stroke-width="2"/></svg>
  <div class="a tbtn" style="left:440px;width:156px;background:linear-gradient(#5A9CF8,#3C81F3 20%,#3A7CEE 80%,#2E68D8);border:1px solid #2A5ED0">Bez názvu - Malování</div>
  <svg class="a" style="left:449px;top:10px" width="16" height="18"><path d="M3 2 L5 16 H11 L13 2Z" fill="#C8A060" stroke="#604020"/><path d="M4 3 L7 9 M8 2 L9 9 M12 3 L10 9" stroke="#2040C0" stroke-width="1.5"/><path d="M6 4 L7 1" stroke="#E02020" stroke-width="1.5"/></svg>
  <svg class="a" style="left:854px;top:8px" width="8" height="26"><g fill="#1A3FA8"><rect x="2" y="2" width="2" height="2"/><rect x="2" y="6" width="2" height="2"/><rect x="2" y="10" width="2" height="2"/><rect x="2" y="14" width="2" height="2"/><rect x="2" y="18" width="2" height="2"/></g><g fill="#6A9AF0"><rect x="3" y="3" width="1" height="1"/><rect x="3" y="7" width="1" height="1"/><rect x="3" y="11" width="1" height="1"/><rect x="3" y="15" width="1" height="1"/><rect x="3" y="19" width="1" height="1"/></g></svg>
  <div class="a" style="left:895px;top:0;width:129px;height:34px;background:linear-gradient(#1AA0F0 0%,#18A4F4 10%,#1290E8 50%,#0E88E0 90%,#0A70C8 100%);border-left:1px solid #0A5AC0"></div>
  <svg class="a" style="left:904px;top:10px" width="76" height="18">
    <rect x="2" y="4" width="9" height="8" fill="#5070A0" stroke="#203050"/><rect x="3" y="13" width="7" height="2" fill="#C0C0C0"/><path d="M12 5 Q14 8 12 11 M14 3 Q17 8 14 13" fill="none" stroke="#fff" stroke-width="1.2"/>
    <rect x="25" y="2" width="8" height="8" fill="#8090C0" stroke="#203050"/><rect x="21" y="6" width="8" height="8" fill="#5070A0" stroke="#203050"/><path d="M29 9 L36 16 M36 9 L29 16" stroke="#E02020" stroke-width="2"/>
    <circle cx="46" cy="8" r="7.5" fill="#E05A10"/><circle cx="46" cy="8" r="4" fill="#fff"/><circle cx="46" cy="8" r="2.2" fill="#E87020"/><path d="M46 4 V8 H50" stroke="#E05A10" stroke-width="1.5" fill="none"/>
    <rect x="57" y="2" width="15" height="14" fill="#fff"/><rect x="57" y="2" width="15" height="3" fill="#2030A0"/><path d="M57 8H72 M57 11H72 M57 14H72 M60 5V16 M64 5V16 M68 5V16" stroke="#5070C0" stroke-width="0.8"/><rect x="60" y="8" width="3" height="2" fill="#E02020"/>
  </svg>
  <div class="a" style="left:986px;top:12px;color:#fff;font-size:11.5px">8:43</div>
</div>
</body></html>
